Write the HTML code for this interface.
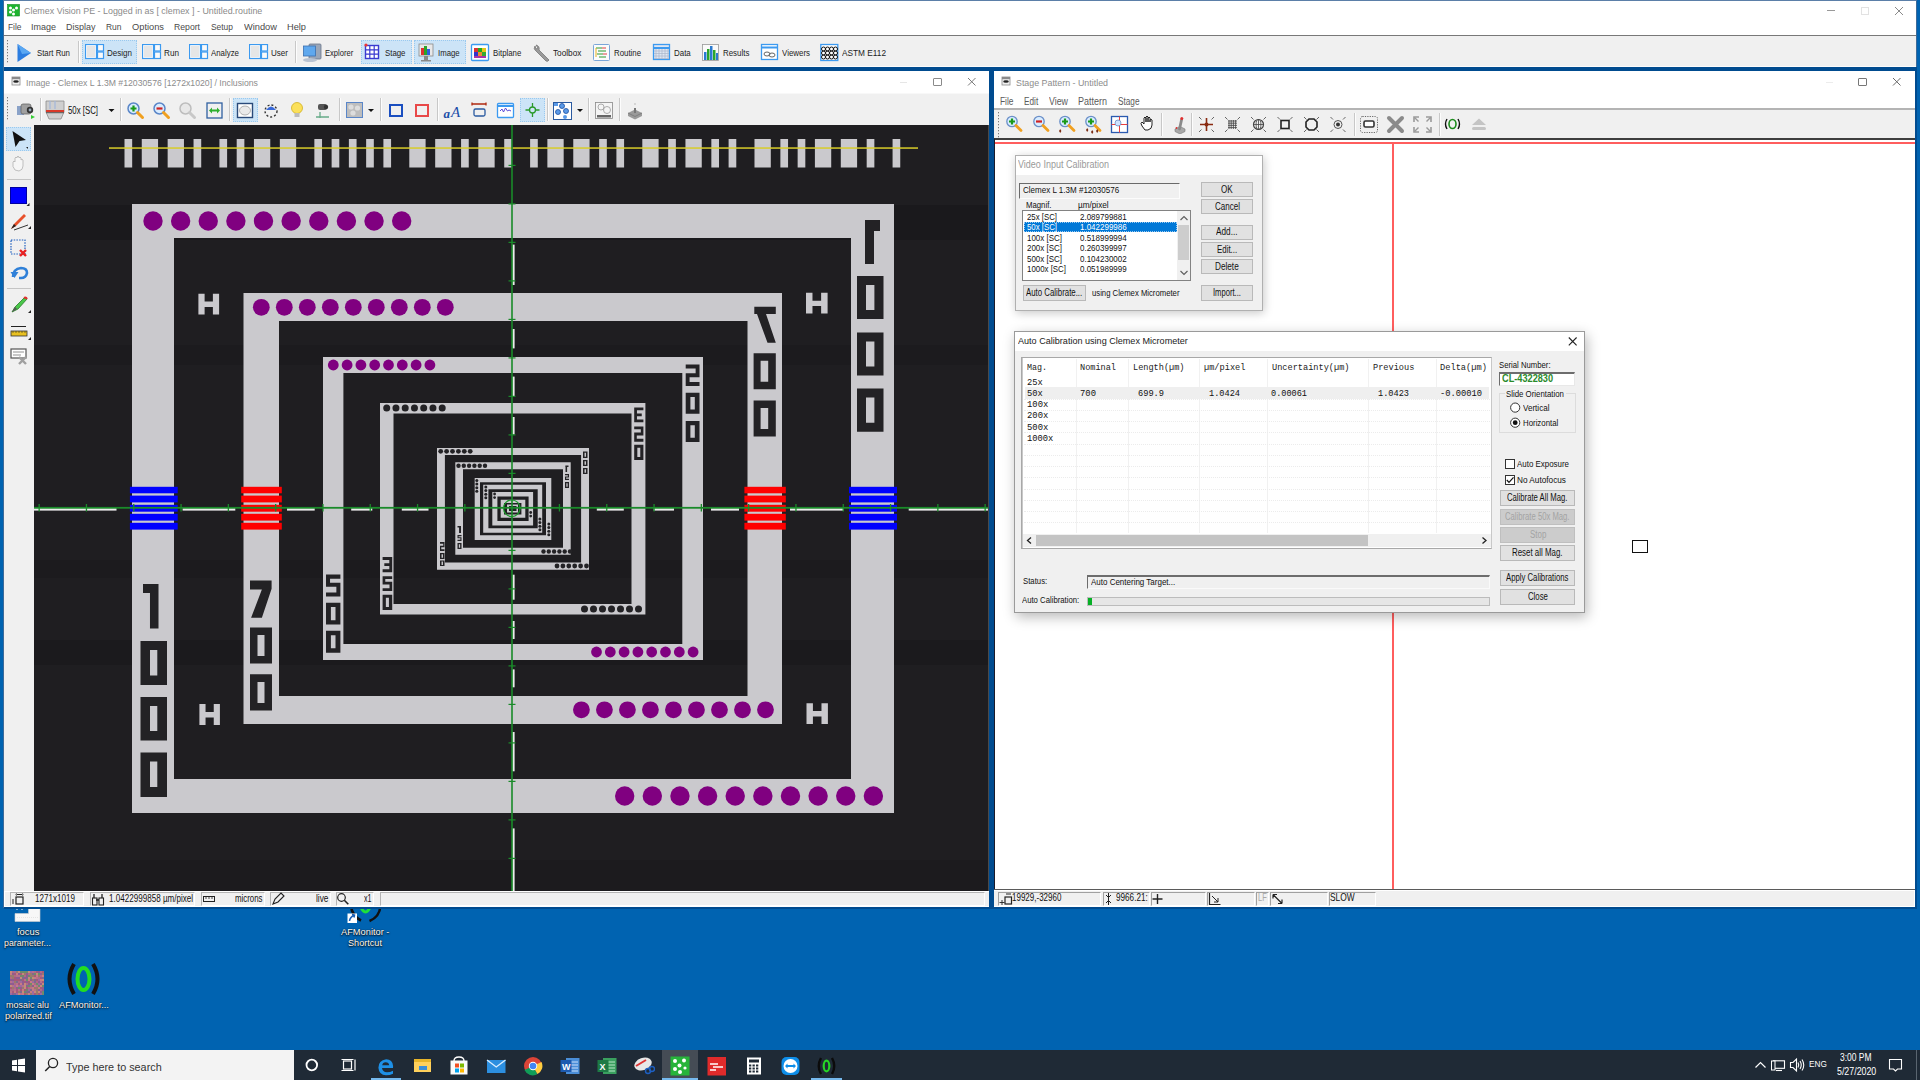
<!DOCTYPE html>
<html><head><meta charset="utf-8"><title>Clemex Vision PE</title>
<style>
html,body{margin:0;padding:0;}
body{width:1920px;height:1080px;position:relative;overflow:hidden;background:#0063b1;font-family:"Liberation Sans",sans-serif;}
div{position:absolute;box-sizing:border-box;}
.t{white-space:nowrap;transform-origin:0 0;}
</style></head><body>
<svg style="position:absolute;left:14px;top:906px;" width="28" height="17" viewBox="14 906 28 17"><path d="M15 913.5 H28.5 V907 H40 V921.5 H15 Z" fill="#f7f7f7" stroke="#cfcfcf" stroke-width="0.6"/><rect x="16" y="907.5" width="2" height="2" fill="#f2f2f2"/><rect x="21" y="907.5" width="2" height="2" fill="#f2f2f2"/><path d="M17 917.5 h21" stroke="#e4e4e4" stroke-width="1" stroke-dasharray="1 1"/></svg>
<div class="t" style="left:16.50px;top:927.16px;font-family:'Liberation Sans', sans-serif;font-size:9.86px;line-height:9.86px;color:#fff;transform:scaleX(0.9553);text-shadow:0 1px 2px #000,0 0 1px #000;">focus</div>
<div class="t" style="left:4.00px;top:937.96px;font-family:'Liberation Sans', sans-serif;font-size:9.86px;line-height:9.86px;color:#fff;transform:scaleX(0.8939);text-shadow:0 1px 2px #000,0 0 1px #000;">parameter...</div>
<svg style="position:absolute;left:340px;top:905px;" width="50" height="20" viewBox="340 905 50 20"><path d="M351 906 q1 10 10 14.5" stroke="#111" stroke-width="2.6" fill="none"/><path d="M380.5 906 q-1 11 -11 15" stroke="#111" stroke-width="2.6" fill="none"/><path d="M360.5 906 q5 12 10 0" stroke="#1ee03a" stroke-width="3.2" fill="none"/><rect x="347.5" y="913.5" width="9.5" height="9.5" fill="#fff"/><path d="M349.5 921 q0.5 -4 5 -6 m-2.5 -0.5 l2.5 0.5 l-0.5 2.5" stroke="#1a5fb4" stroke-width="1.5" fill="none"/></svg>
<div class="t" style="left:340.50px;top:927.16px;font-family:'Liberation Sans', sans-serif;font-size:9.86px;line-height:9.86px;color:#fff;transform:scaleX(0.9419);text-shadow:0 1px 2px #000,0 0 1px #000;">AFMonitor -</div>
<div class="t" style="left:348.00px;top:937.96px;font-family:'Liberation Sans', sans-serif;font-size:9.86px;line-height:9.86px;color:#fff;transform:scaleX(0.9262);text-shadow:0 1px 2px #000,0 0 1px #000;">Shortcut</div>
<svg style="position:absolute;left:10px;top:971px;" width="34" height="24" viewBox="10 971 34 24"><rect x="10" y="971" width="2" height="2" fill="#c58a7a"/><rect x="10" y="973" width="2" height="2" fill="#c77c82"/><rect x="10" y="975" width="2" height="2" fill="#9a7a6a"/><rect x="10" y="977" width="2" height="2" fill="#b06a86"/><rect x="10" y="979" width="2" height="2" fill="#8f5c90"/><rect x="10" y="981" width="2" height="2" fill="#b8708a"/><rect x="10" y="983" width="2" height="2" fill="#8f5c90"/><rect x="10" y="985" width="2" height="2" fill="#c58a7a"/><rect x="10" y="987" width="2" height="2" fill="#a55a7a"/><rect x="10" y="989" width="2" height="2" fill="#b06a86"/><rect x="10" y="991" width="2" height="2" fill="#b8708a"/><rect x="10" y="993" width="2" height="2" fill="#a06a9e"/><rect x="12" y="971" width="2" height="2" fill="#b06a86"/><rect x="12" y="973" width="2" height="2" fill="#8f5c90"/><rect x="12" y="975" width="2" height="2" fill="#9a7a6a"/><rect x="12" y="977" width="2" height="2" fill="#9a7a6a"/><rect x="12" y="979" width="2" height="2" fill="#8f5c90"/><rect x="12" y="981" width="2" height="2" fill="#a06a9e"/><rect x="12" y="983" width="2" height="2" fill="#8f5c90"/><rect x="12" y="985" width="2" height="2" fill="#b8708a"/><rect x="12" y="987" width="2" height="2" fill="#9a7a6a"/><rect x="12" y="989" width="2" height="2" fill="#b06a86"/><rect x="12" y="991" width="2" height="2" fill="#a55a7a"/><rect x="12" y="993" width="2" height="2" fill="#8f5c90"/><rect x="14" y="971" width="2" height="2" fill="#a06a9e"/><rect x="14" y="973" width="2" height="2" fill="#a55a7a"/><rect x="14" y="975" width="2" height="2" fill="#b06a86"/><rect x="14" y="977" width="2" height="2" fill="#a55a7a"/><rect x="14" y="979" width="2" height="2" fill="#a55a7a"/><rect x="14" y="981" width="2" height="2" fill="#9a7a6a"/><rect x="14" y="983" width="2" height="2" fill="#b06a86"/><rect x="14" y="985" width="2" height="2" fill="#a06a9e"/><rect x="14" y="987" width="2" height="2" fill="#b06a86"/><rect x="14" y="989" width="2" height="2" fill="#b8708a"/><rect x="14" y="991" width="2" height="2" fill="#c77c82"/><rect x="14" y="993" width="2" height="2" fill="#7f6a8c"/><rect x="16" y="971" width="2" height="2" fill="#9a7a6a"/><rect x="16" y="973" width="2" height="2" fill="#c77c82"/><rect x="16" y="975" width="2" height="2" fill="#b8708a"/><rect x="16" y="977" width="2" height="2" fill="#8f5c90"/><rect x="16" y="979" width="2" height="2" fill="#a55a7a"/><rect x="16" y="981" width="2" height="2" fill="#7f6a8c"/><rect x="16" y="983" width="2" height="2" fill="#b8708a"/><rect x="16" y="985" width="2" height="2" fill="#c77c82"/><rect x="16" y="987" width="2" height="2" fill="#8f5c90"/><rect x="16" y="989" width="2" height="2" fill="#a55a7a"/><rect x="16" y="991" width="2" height="2" fill="#a55a7a"/><rect x="16" y="993" width="2" height="2" fill="#a06a9e"/><rect x="18" y="971" width="2" height="2" fill="#c58a7a"/><rect x="18" y="973" width="2" height="2" fill="#8f5c90"/><rect x="18" y="975" width="2" height="2" fill="#b8708a"/><rect x="18" y="977" width="2" height="2" fill="#8f5c90"/><rect x="18" y="979" width="2" height="2" fill="#a55a7a"/><rect x="18" y="981" width="2" height="2" fill="#b06a86"/><rect x="18" y="983" width="2" height="2" fill="#a55a7a"/><rect x="18" y="985" width="2" height="2" fill="#a06a9e"/><rect x="18" y="987" width="2" height="2" fill="#6f8a6a"/><rect x="18" y="989" width="2" height="2" fill="#b8708a"/><rect x="18" y="991" width="2" height="2" fill="#9a7a6a"/><rect x="18" y="993" width="2" height="2" fill="#c58a7a"/><rect x="20" y="971" width="2" height="2" fill="#6f8a6a"/><rect x="20" y="973" width="2" height="2" fill="#a55a7a"/><rect x="20" y="975" width="2" height="2" fill="#6f8a6a"/><rect x="20" y="977" width="2" height="2" fill="#c58a7a"/><rect x="20" y="979" width="2" height="2" fill="#7f6a8c"/><rect x="20" y="981" width="2" height="2" fill="#a06a9e"/><rect x="20" y="983" width="2" height="2" fill="#c77c82"/><rect x="20" y="985" width="2" height="2" fill="#a06a9e"/><rect x="20" y="987" width="2" height="2" fill="#8f5c90"/><rect x="20" y="989" width="2" height="2" fill="#a55a7a"/><rect x="20" y="991" width="2" height="2" fill="#7f6a8c"/><rect x="20" y="993" width="2" height="2" fill="#b8708a"/><rect x="22" y="971" width="2" height="2" fill="#6f8a6a"/><rect x="22" y="973" width="2" height="2" fill="#c58a7a"/><rect x="22" y="975" width="2" height="2" fill="#6f8a6a"/><rect x="22" y="977" width="2" height="2" fill="#7f6a8c"/><rect x="22" y="979" width="2" height="2" fill="#a55a7a"/><rect x="22" y="981" width="2" height="2" fill="#8f5c90"/><rect x="22" y="983" width="2" height="2" fill="#8f5c90"/><rect x="22" y="985" width="2" height="2" fill="#b8708a"/><rect x="22" y="987" width="2" height="2" fill="#9a7a6a"/><rect x="22" y="989" width="2" height="2" fill="#c77c82"/><rect x="22" y="991" width="2" height="2" fill="#c58a7a"/><rect x="22" y="993" width="2" height="2" fill="#c77c82"/><rect x="24" y="971" width="2" height="2" fill="#6f8a6a"/><rect x="24" y="973" width="2" height="2" fill="#9a7a6a"/><rect x="24" y="975" width="2" height="2" fill="#b06a86"/><rect x="24" y="977" width="2" height="2" fill="#8f5c90"/><rect x="24" y="979" width="2" height="2" fill="#b8708a"/><rect x="24" y="981" width="2" height="2" fill="#a55a7a"/><rect x="24" y="983" width="2" height="2" fill="#c58a7a"/><rect x="24" y="985" width="2" height="2" fill="#c58a7a"/><rect x="24" y="987" width="2" height="2" fill="#c58a7a"/><rect x="24" y="989" width="2" height="2" fill="#a55a7a"/><rect x="24" y="991" width="2" height="2" fill="#6f8a6a"/><rect x="24" y="993" width="2" height="2" fill="#a55a7a"/><rect x="26" y="971" width="2" height="2" fill="#6f8a6a"/><rect x="26" y="973" width="2" height="2" fill="#8f5c90"/><rect x="26" y="975" width="2" height="2" fill="#8f5c90"/><rect x="26" y="977" width="2" height="2" fill="#7f6a8c"/><rect x="26" y="979" width="2" height="2" fill="#6f8a6a"/><rect x="26" y="981" width="2" height="2" fill="#8f5c90"/><rect x="26" y="983" width="2" height="2" fill="#b06a86"/><rect x="26" y="985" width="2" height="2" fill="#7f6a8c"/><rect x="26" y="987" width="2" height="2" fill="#a55a7a"/><rect x="26" y="989" width="2" height="2" fill="#6f8a6a"/><rect x="26" y="991" width="2" height="2" fill="#7f6a8c"/><rect x="26" y="993" width="2" height="2" fill="#9a7a6a"/><rect x="28" y="971" width="2" height="2" fill="#c58a7a"/><rect x="28" y="973" width="2" height="2" fill="#b06a86"/><rect x="28" y="975" width="2" height="2" fill="#6f8a6a"/><rect x="28" y="977" width="2" height="2" fill="#c58a7a"/><rect x="28" y="979" width="2" height="2" fill="#c77c82"/><rect x="28" y="981" width="2" height="2" fill="#a55a7a"/><rect x="28" y="983" width="2" height="2" fill="#8f5c90"/><rect x="28" y="985" width="2" height="2" fill="#6f8a6a"/><rect x="28" y="987" width="2" height="2" fill="#b06a86"/><rect x="28" y="989" width="2" height="2" fill="#a06a9e"/><rect x="28" y="991" width="2" height="2" fill="#7f6a8c"/><rect x="28" y="993" width="2" height="2" fill="#c77c82"/><rect x="30" y="971" width="2" height="2" fill="#a06a9e"/><rect x="30" y="973" width="2" height="2" fill="#9a7a6a"/><rect x="30" y="975" width="2" height="2" fill="#9a7a6a"/><rect x="30" y="977" width="2" height="2" fill="#6f8a6a"/><rect x="30" y="979" width="2" height="2" fill="#8f5c90"/><rect x="30" y="981" width="2" height="2" fill="#c77c82"/><rect x="30" y="983" width="2" height="2" fill="#6f8a6a"/><rect x="30" y="985" width="2" height="2" fill="#9a7a6a"/><rect x="30" y="987" width="2" height="2" fill="#b8708a"/><rect x="30" y="989" width="2" height="2" fill="#7f6a8c"/><rect x="30" y="991" width="2" height="2" fill="#c77c82"/><rect x="30" y="993" width="2" height="2" fill="#9a7a6a"/><rect x="32" y="971" width="2" height="2" fill="#b8708a"/><rect x="32" y="973" width="2" height="2" fill="#7f6a8c"/><rect x="32" y="975" width="2" height="2" fill="#9a7a6a"/><rect x="32" y="977" width="2" height="2" fill="#c58a7a"/><rect x="32" y="979" width="2" height="2" fill="#9a7a6a"/><rect x="32" y="981" width="2" height="2" fill="#a06a9e"/><rect x="32" y="983" width="2" height="2" fill="#c77c82"/><rect x="32" y="985" width="2" height="2" fill="#8f5c90"/><rect x="32" y="987" width="2" height="2" fill="#c77c82"/><rect x="32" y="989" width="2" height="2" fill="#c77c82"/><rect x="32" y="991" width="2" height="2" fill="#a06a9e"/><rect x="32" y="993" width="2" height="2" fill="#a06a9e"/><rect x="34" y="971" width="2" height="2" fill="#b06a86"/><rect x="34" y="973" width="2" height="2" fill="#6f8a6a"/><rect x="34" y="975" width="2" height="2" fill="#a55a7a"/><rect x="34" y="977" width="2" height="2" fill="#c77c82"/><rect x="34" y="979" width="2" height="2" fill="#7f6a8c"/><rect x="34" y="981" width="2" height="2" fill="#7f6a8c"/><rect x="34" y="983" width="2" height="2" fill="#b06a86"/><rect x="34" y="985" width="2" height="2" fill="#c77c82"/><rect x="34" y="987" width="2" height="2" fill="#9a7a6a"/><rect x="34" y="989" width="2" height="2" fill="#b8708a"/><rect x="34" y="991" width="2" height="2" fill="#c58a7a"/><rect x="34" y="993" width="2" height="2" fill="#a55a7a"/><rect x="36" y="971" width="2" height="2" fill="#a55a7a"/><rect x="36" y="973" width="2" height="2" fill="#c58a7a"/><rect x="36" y="975" width="2" height="2" fill="#c77c82"/><rect x="36" y="977" width="2" height="2" fill="#b8708a"/><rect x="36" y="979" width="2" height="2" fill="#a55a7a"/><rect x="36" y="981" width="2" height="2" fill="#b06a86"/><rect x="36" y="983" width="2" height="2" fill="#6f8a6a"/><rect x="36" y="985" width="2" height="2" fill="#b8708a"/><rect x="36" y="987" width="2" height="2" fill="#9a7a6a"/><rect x="36" y="989" width="2" height="2" fill="#9a7a6a"/><rect x="36" y="991" width="2" height="2" fill="#9a7a6a"/><rect x="36" y="993" width="2" height="2" fill="#9a7a6a"/><rect x="38" y="971" width="2" height="2" fill="#8f5c90"/><rect x="38" y="973" width="2" height="2" fill="#6f8a6a"/><rect x="38" y="975" width="2" height="2" fill="#9a7a6a"/><rect x="38" y="977" width="2" height="2" fill="#b06a86"/><rect x="38" y="979" width="2" height="2" fill="#a06a9e"/><rect x="38" y="981" width="2" height="2" fill="#8f5c90"/><rect x="38" y="983" width="2" height="2" fill="#a06a9e"/><rect x="38" y="985" width="2" height="2" fill="#6f8a6a"/><rect x="38" y="987" width="2" height="2" fill="#c77c82"/><rect x="38" y="989" width="2" height="2" fill="#8f5c90"/><rect x="38" y="991" width="2" height="2" fill="#c58a7a"/><rect x="38" y="993" width="2" height="2" fill="#a55a7a"/><rect x="40" y="971" width="2" height="2" fill="#b06a86"/><rect x="40" y="973" width="2" height="2" fill="#8f5c90"/><rect x="40" y="975" width="2" height="2" fill="#b06a86"/><rect x="40" y="977" width="2" height="2" fill="#a55a7a"/><rect x="40" y="979" width="2" height="2" fill="#c77c82"/><rect x="40" y="981" width="2" height="2" fill="#b8708a"/><rect x="40" y="983" width="2" height="2" fill="#8f5c90"/><rect x="40" y="985" width="2" height="2" fill="#c58a7a"/><rect x="40" y="987" width="2" height="2" fill="#a55a7a"/><rect x="40" y="989" width="2" height="2" fill="#b06a86"/><rect x="40" y="991" width="2" height="2" fill="#8f5c90"/><rect x="40" y="993" width="2" height="2" fill="#a06a9e"/><rect x="42" y="971" width="2" height="2" fill="#a55a7a"/><rect x="42" y="973" width="2" height="2" fill="#9a7a6a"/><rect x="42" y="975" width="2" height="2" fill="#c77c82"/><rect x="42" y="977" width="2" height="2" fill="#7f6a8c"/><rect x="42" y="979" width="2" height="2" fill="#c58a7a"/><rect x="42" y="981" width="2" height="2" fill="#a55a7a"/><rect x="42" y="983" width="2" height="2" fill="#c58a7a"/><rect x="42" y="985" width="2" height="2" fill="#6f8a6a"/><rect x="42" y="987" width="2" height="2" fill="#8f5c90"/><rect x="42" y="989" width="2" height="2" fill="#8f5c90"/><rect x="42" y="991" width="2" height="2" fill="#6f8a6a"/><rect x="42" y="993" width="2" height="2" fill="#6f8a6a"/></svg>
<div class="t" style="left:6.30px;top:999.96px;font-family:'Liberation Sans', sans-serif;font-size:9.86px;line-height:9.86px;color:#fff;transform:scaleX(0.9128);text-shadow:0 1px 2px #000,0 0 1px #000;">mosaic alu</div>
<div class="t" style="left:4.50px;top:1011.16px;font-family:'Liberation Sans', sans-serif;font-size:9.86px;line-height:9.86px;color:#fff;transform:scaleX(0.9284);text-shadow:0 1px 2px #000,0 0 1px #000;">polarized.tif</div>
<svg style="position:absolute;left:64px;top:960px;" width="40" height="38" viewBox="64 960 40 38"><path d="M74 964 q-9 15 0 30" stroke="#111" stroke-width="4" fill="none"/><path d="M93 964 q9 15 0 30" stroke="#111" stroke-width="4" fill="none"/><ellipse cx="83.5" cy="979" rx="6" ry="11" stroke="#22dd22" stroke-width="4" fill="none"/></svg>
<div class="t" style="left:59.30px;top:999.96px;font-family:'Liberation Sans', sans-serif;font-size:9.86px;line-height:9.86px;color:#fff;transform:scaleX(0.9413);text-shadow:0 1px 2px #000,0 0 1px #000;">AFMonitor...</div>
<div style="left:0px;top:1050px;width:1920px;height:30px;background:#1f2a36;"></div>
<svg style="position:absolute;left:11px;top:1058px;" width="15" height="15" viewBox="11 1058 15 15"><path d="M12 1060.5 l5 -0.8 v5.3 h-5z M18 1059.6 l7 -1 v6.4 h-7z M12 1066 h5 v5.3 l-5 -0.8z M18 1066 h7 v6.4 l-7 -1z" fill="#fff"/></svg>
<div style="left:36px;top:1050px;width:258px;height:30px;background:#f3f3f3;"></div>
<svg style="position:absolute;left:43px;top:1057px;" width="17" height="17" viewBox="43 1057 17 17"><circle cx="53" cy="1063" r="4.6" stroke="#222" stroke-width="1.3" fill="none"/><path d="M49.7 1066.5 l-4.5 4.6" stroke="#222" stroke-width="1.5"/></svg>
<div class="t" style="left:66.30px;top:1061.54px;font-family:'Liberation Sans', sans-serif;font-size:10.58px;line-height:10.58px;color:#333;transform:scaleX(1.0233);">Type here to search</div>
<svg style="position:absolute;left:303px;top:1057px;" width="18" height="18" viewBox="303 1057 18 18"><circle cx="311.8" cy="1065" r="5.3" stroke="#fff" stroke-width="1.8" fill="none"/></svg>
<svg style="position:absolute;left:340px;top:1057px;" width="18" height="18" viewBox="340 1057 18 18"><rect x="343.5" y="1061" width="8" height="8" stroke="#fff" stroke-width="1.2" fill="none"/><path d="M341.5 1059.5 h12 M341.5 1070.5 h12 M355 1059.5 v11" stroke="#fff" stroke-width="1.2"/></svg>
<svg style="position:absolute;left:376px;top:1056px;" width="22" height="20" viewBox="376 1056 22 20"><path d="M393 1068 h-11 q0.5 4 5 4.3 q3 0 6 -1.6 v3 q-3 1.6 -7 1.6 q-7 -0.3 -7.6 -7.5 q0 -7.5 7.8 -8.5 q6.3 0 6.9 6.7z M382.2 1065.3 h7 q-0.3 -3 -3.6 -3 q-3 0.2 -3.4 3z" fill="#1e90e6"/></svg>
<div style="left:371px;top:1078px;width:30px;height:2px;background:#76b9ed;"></div>
<svg style="position:absolute;left:413px;top:1057px;" width="20" height="18" viewBox="413 1057 20 18"><rect x="414" y="1059" width="17" height="13" fill="#e8b52a"/><rect x="414" y="1062" width="17" height="10" fill="#ffd15c"/><rect x="419" y="1066" width="8" height="4" fill="#3b8fd8"/></svg>
<svg style="position:absolute;left:449px;top:1056px;" width="21" height="21" viewBox="449 1056 21 21"><path d="M454 1061 q0 -4 5 -4 q5 0 5 4" stroke="#fff" stroke-width="1.4" fill="none"/><rect x="450.5" y="1060.5" width="17" height="14" fill="#fafafa"/><rect x="455" y="1063.5" width="4" height="4" fill="#f25022"/><rect x="460" y="1063.5" width="4" height="4" fill="#7fba00"/><rect x="455" y="1068.5" width="4" height="4" fill="#00a4ef"/><rect x="460" y="1068.5" width="4" height="4" fill="#ffb900"/></svg>
<svg style="position:absolute;left:486px;top:1057px;" width="21" height="19" viewBox="486 1057 21 19"><rect x="487" y="1060" width="18.5" height="13" fill="#2c8fe0"/><path d="M487 1060 l9.25 7 l9.25 -7" stroke="#dbeeff" stroke-width="1.3" fill="none"/></svg>
<svg style="position:absolute;left:523px;top:1056px;" width="21" height="21" viewBox="523 1056 21 21"><circle cx="533" cy="1066" r="9" fill="#db4437"/><path d="M533 1066 L524.5 1070 A9 9 0 0 0 537.5 1074 z" fill="#0f9d58"/><path d="M533 1066 L537.5 1074 A9 9 0 0 0 541.5 1062 z" fill="#ffcd40"/><circle cx="533" cy="1066" r="4.2" fill="#fff"/><circle cx="533" cy="1066" r="3.3" fill="#4285f4"/></svg>
<svg style="position:absolute;left:559px;top:1056px;" width="22" height="20" viewBox="559 1056 22 20"><rect x="566" y="1058" width="13.5" height="16" fill="#4a8ed8"/><path d="M568 1062 h10 M568 1065 h10 M568 1068 h10 M568 1071 h10" stroke="#c9defa" stroke-width="1"/><rect x="560.5" y="1060" width="11" height="12" fill="#1d5bb0"/><text x="562" y="1069.8" font-family="Liberation Sans" font-weight="bold" font-size="9" fill="#fff">W</text></svg>
<svg style="position:absolute;left:596px;top:1056px;" width="22" height="20" viewBox="596 1056 22 20"><rect x="603" y="1058" width="13.5" height="16" fill="#3aa05f"/><path d="M605 1062 h10 M605 1065 h10 M605 1068 h10 M605 1071 h10" stroke="#b8e6c8" stroke-width="1"/><rect x="597.5" y="1060" width="11" height="12" fill="#1e7a45"/><text x="599.5" y="1069.8" font-family="Liberation Sans" font-weight="bold" font-size="9" fill="#fff">X</text></svg>
<svg style="position:absolute;left:633px;top:1056px;" width="22" height="20" viewBox="633 1056 22 20"><ellipse cx="643" cy="1064" rx="9" ry="6" fill="#e7e7e7" transform="rotate(-20 643 1064)"/><path d="M636 1066 l10 -6" stroke="#d33" stroke-width="2"/><circle cx="648" cy="1071" r="2.5" stroke="#1e5fc0" stroke-width="1.4" fill="none"/><circle cx="652" cy="1069" r="2.5" stroke="#1e5fc0" stroke-width="1.4" fill="none"/></svg>
<div style="left:662px;top:1050px;width:36px;height:30px;background:#454c55;"></div>
<div style="left:662px;top:1078px;width:36px;height:2px;background:#76b9ed;"></div>
<svg style="position:absolute;left:670px;top:1056px;" width="21" height="21" viewBox="670 1056 21 21"><rect x="670.5" y="1056.5" width="19" height="19" fill="#27b43a"/><circle cx="675" cy="1061" r="2" fill="#fff"/><circle cx="684" cy="1060.5" r="2" fill="#fff"/><circle cx="679.5" cy="1065.5" r="2" fill="#fff"/><circle cx="675" cy="1069" r="2" fill="#fff"/><circle cx="680" cy="1072" r="2" fill="#fff"/><circle cx="685" cy="1068" r="1.6" fill="#fff"/></svg>
<svg style="position:absolute;left:706px;top:1056px;" width="22" height="21" viewBox="706 1056 22 21"><rect x="707.5" y="1057" width="18.5" height="18.5" fill="#e02b2b"/><path d="M710 1064 h8 M713 1067 h10 M710 1070 h6" stroke="#fff" stroke-width="1.6"/></svg>
<svg style="position:absolute;left:745px;top:1056px;" width="18" height="20" viewBox="745 1056 18 20"><rect x="747" y="1057.5" width="14" height="17" fill="#fff"/><rect x="749" y="1059.5" width="10" height="3" fill="#1f2a36"/><rect x="749.0" y="1064.5" width="2.3" height="2" fill="#1f2a36"/><rect x="749.0" y="1067.5" width="2.3" height="2" fill="#1f2a36"/><rect x="749.0" y="1070.5" width="2.3" height="2" fill="#1f2a36"/><rect x="752.5" y="1064.5" width="2.3" height="2" fill="#1f2a36"/><rect x="752.5" y="1067.5" width="2.3" height="2" fill="#1f2a36"/><rect x="752.5" y="1070.5" width="2.3" height="2" fill="#1f2a36"/><rect x="756.0" y="1064.5" width="2.3" height="2" fill="#1f2a36"/><rect x="756.0" y="1067.5" width="2.3" height="2" fill="#1f2a36"/><rect x="756.0" y="1070.5" width="2.3" height="2" fill="#1f2a36"/></svg>
<svg style="position:absolute;left:780px;top:1056px;" width="22" height="21" viewBox="780 1056 22 21"><rect x="781.5" y="1057" width="18" height="18" rx="5" fill="#0e8ee9"/><circle cx="790.5" cy="1066" r="7" fill="#fff"/><path d="M785 1066 l2.5 -2.5 v1.6 h6 v-1.6 l2.5 2.5 l-2.5 2.5 v-1.6 h-6 v1.6z" fill="#0e8ee9"/></svg>
<svg style="position:absolute;left:816px;top:1055px;" width="22" height="22" viewBox="816 1055 22 22"><path d="M821 1058 q-4.5 8 0 16" stroke="#0b0b0b" stroke-width="2.4" fill="none"/><path d="M832 1058 q4.5 8 0 16" stroke="#0b0b0b" stroke-width="2.4" fill="none"/><ellipse cx="826.5" cy="1066" rx="2.8" ry="5.3" stroke="#26d626" stroke-width="2.2" fill="none"/></svg>
<div style="left:811px;top:1078px;width:31px;height:2px;background:#76b9ed;"></div>
<svg style="position:absolute;left:1752px;top:1056px;" width="56" height="20" viewBox="1752 1056 56 20"><path d="M1755.5 1067.5 l5 -5 l5 5" stroke="#fff" stroke-width="1.2" fill="none"/><rect x="1773.5" y="1060.8" width="11" height="7.5" stroke="#fff" stroke-width="1.1" fill="none"/><rect x="1771.5" y="1061" width="3.5" height="9" fill="#1f2a36" stroke="#fff" stroke-width="1"/><path d="M1776 1070.5 h6" stroke="#fff" stroke-width="1.1"/><path d="M1790.5 1062.5 h2.5 l3.5 -3.5 v12 l-3.5 -3.5 h-2.5z" stroke="#fff" stroke-width="1.1" fill="none"/><path d="M1798 1062.5 q1.5 2.5 0 5 M1800 1061 q2.5 4 0 8 M1802 1059.5 q3.5 5.5 0 11" stroke="#fff" stroke-width="1.1" fill="none"/></svg>
<div class="t" style="left:1809.40px;top:1059.46px;font-family:'Liberation Sans', sans-serif;font-size:9.86px;line-height:9.86px;color:#fff;transform:scaleX(0.8343);">ENG</div>
<div class="t" style="left:1840.40px;top:1052.67px;font-family:'Liberation Sans', sans-serif;font-size:10.43px;line-height:10.43px;color:#fff;transform:scaleX(0.8104);">3:00 PM</div>
<div class="t" style="left:1836.60px;top:1065.64px;font-family:'Liberation Sans', sans-serif;font-size:10.58px;line-height:10.58px;color:#fff;transform:scaleX(0.8348);">5/27/2020</div>
<svg style="position:absolute;left:1886px;top:1056px;" width="18" height="18" viewBox="1886 1056 18 18"><path d="M1889.5 1059.5 h12 v9.5 h-4 l-2 2 l-2 -2 h-4z" stroke="#fff" stroke-width="1.1" fill="none"/></svg>
<div style="left:1916px;top:1050px;width:1px;height:30px;background:#5a6570;"></div>
<div style="left:3px;top:0px;width:1914px;height:908px;background:#fff;border:1px solid #3d6a99;border-top-color:#5b7fa8;"></div>
<svg style="position:absolute;left:7px;top:4px;" width="14" height="13" viewBox="7 4 14 13"><rect x="7.5" y="4.5" width="12" height="11.5" fill="#1db32e" stroke="#138a20" stroke-width="0.6"/><circle cx="10.5" cy="8" r="1.5" fill="#fff"/><circle cx="16.5" cy="8" r="1.5" fill="#fff"/><circle cx="13.5" cy="10" r="1.5" fill="#fff"/><circle cx="10.5" cy="12" r="1.5" fill="#fff"/><circle cx="13.5" cy="14" r="1.5" fill="#fff"/></svg>
<div class="t" style="left:23.50px;top:5.78px;font-family:'Liberation Sans', sans-serif;font-size:9.71px;line-height:9.71px;color:#8a8a8a;transform:scaleX(0.9173);">Clemex Vision PE - Logged in as [ clemex ] - Untitled.routine</div>
<div style="left:1827px;top:10px;width:8px;height:1px;background:#999;"></div>
<div style="left:1861px;top:7px;width:8px;height:8px;border:1px solid #e2e2e2;"></div>
<svg style="position:absolute;left:1894px;top:6px;" width="10" height="10" viewBox="1894 6 10 10"><path d="M1895 7 l8 8 M1903 7 l-8 8" stroke="#8a8a8a" stroke-width="1"/></svg>
<div class="t" style="left:7.50px;top:21.78px;font-family:'Liberation Sans', sans-serif;font-size:9.71px;line-height:9.71px;color:#4a4a4a;transform:scaleX(0.8635);">File</div>
<div class="t" style="left:31.00px;top:21.78px;font-family:'Liberation Sans', sans-serif;font-size:9.71px;line-height:9.71px;color:#4a4a4a;transform:scaleX(0.9261);">Image</div>
<div class="t" style="left:66.00px;top:21.78px;font-family:'Liberation Sans', sans-serif;font-size:9.71px;line-height:9.71px;color:#4a4a4a;transform:scaleX(0.9262);">Display</div>
<div class="t" style="left:105.50px;top:21.78px;font-family:'Liberation Sans', sans-serif;font-size:9.71px;line-height:9.71px;color:#4a4a4a;transform:scaleX(0.8699);">Run</div>
<div class="t" style="left:132.00px;top:21.78px;font-family:'Liberation Sans', sans-serif;font-size:9.71px;line-height:9.71px;color:#4a4a4a;transform:scaleX(0.9566);">Options</div>
<div class="t" style="left:174.00px;top:21.78px;font-family:'Liberation Sans', sans-serif;font-size:9.71px;line-height:9.71px;color:#4a4a4a;transform:scaleX(0.8925);">Report</div>
<div class="t" style="left:211.00px;top:21.78px;font-family:'Liberation Sans', sans-serif;font-size:9.71px;line-height:9.71px;color:#4a4a4a;transform:scaleX(0.8664);">Setup</div>
<div class="t" style="left:244.00px;top:21.78px;font-family:'Liberation Sans', sans-serif;font-size:9.71px;line-height:9.71px;color:#4a4a4a;transform:scaleX(0.9546);">Window</div>
<div class="t" style="left:287.00px;top:21.78px;font-family:'Liberation Sans', sans-serif;font-size:9.71px;line-height:9.71px;color:#4a4a4a;transform:scaleX(0.9522);">Help</div>
<div style="left:4px;top:35px;width:1912px;height:1px;background:#787878;"></div>
<div style="left:4px;top:36px;width:1912px;height:31px;background:#f0f0f0;"></div>
<div style="left:4px;top:66px;width:1912px;height:1px;background:#fbfbfb;"></div>
<svg style="position:absolute;left:6px;top:39px;" width="4" height="25" viewBox="6 39 4 25"><rect x="7" y="40" width="1" height="1.3" fill="#7a7a7a"/><rect x="7" y="43" width="1" height="1.3" fill="#7a7a7a"/><rect x="7" y="46" width="1" height="1.3" fill="#7a7a7a"/><rect x="7" y="49" width="1" height="1.3" fill="#7a7a7a"/><rect x="7" y="52" width="1" height="1.3" fill="#7a7a7a"/><rect x="7" y="55" width="1" height="1.3" fill="#7a7a7a"/><rect x="7" y="58" width="1" height="1.3" fill="#7a7a7a"/><rect x="7" y="61" width="1" height="1.3" fill="#7a7a7a"/></svg>
<svg style="position:absolute;left:16px;top:43px;" width="17" height="20" viewBox="16 43 17 20"><path d="M17.5 44 L31 53 L17.5 62 z" fill="#2b7de0"/><path d="M17.5 44 L31 53 L22 54 z" fill="#5aa7f2"/></svg>
<div class="t" style="left:37.00px;top:47.66px;font-family:'Liberation Sans', sans-serif;font-size:9.86px;line-height:9.86px;color:#222;transform:scaleX(0.7926);">Start Run</div>
<div style="left:78px;top:41px;width:1px;height:22px;background:#c8c8c8;"></div>
<div style="left:79px;top:41px;width:1px;height:22px;background:#fdfdfd;"></div>
<div style="left:82px;top:40px;width:55px;height:24px;background:#cce4f7;border:1px dotted #99c9ef;"></div>
<svg style="position:absolute;left:85px;top:44px;" width="20" height="16" viewBox="85 44 20 16"><rect x="85.5" y="44.5" width="11" height="14" fill="#fafafa" stroke="#3c9af0" stroke-width="1.2"/><rect x="97.5" y="44.5" width="6" height="6.5" fill="#fafafa" stroke="#3c9af0" stroke-width="1.2"/><rect x="97.5" y="52" width="6" height="6.5" fill="#fafafa" stroke="#3c9af0" stroke-width="1.2"/><rect x="87" y="46" width="8" height="11" fill="#e6e6e6"/></svg>
<div class="t" style="left:107.00px;top:47.66px;font-family:'Liberation Sans', sans-serif;font-size:9.86px;line-height:9.86px;color:#222;transform:scaleX(0.8144);">Design</div>
<svg style="position:absolute;left:142px;top:44px;" width="20" height="16" viewBox="142 44 20 16"><rect x="142.5" y="44.5" width="11" height="14" fill="#fafafa" stroke="#3c9af0" stroke-width="1.2"/><rect x="154.5" y="44.5" width="6" height="6.5" fill="#fafafa" stroke="#3c9af0" stroke-width="1.2"/><rect x="154.5" y="52" width="6" height="6.5" fill="#fafafa" stroke="#3c9af0" stroke-width="1.2"/><rect x="144" y="46" width="8" height="11" fill="#e6e6e6"/></svg>
<div class="t" style="left:164.00px;top:47.66px;font-family:'Liberation Sans', sans-serif;font-size:9.86px;line-height:9.86px;color:#222;transform:scaleX(0.8295);">Run</div>
<svg style="position:absolute;left:189px;top:44px;" width="20" height="16" viewBox="189 44 20 16"><rect x="189.5" y="44.5" width="11" height="14" fill="#fafafa" stroke="#3c9af0" stroke-width="1.2"/><rect x="201.5" y="44.5" width="6" height="6.5" fill="#fafafa" stroke="#3c9af0" stroke-width="1.2"/><rect x="201.5" y="52" width="6" height="6.5" fill="#fafafa" stroke="#3c9af0" stroke-width="1.2"/><rect x="191" y="46" width="8" height="11" fill="#e6e6e6"/></svg>
<div class="t" style="left:211.00px;top:47.66px;font-family:'Liberation Sans', sans-serif;font-size:9.86px;line-height:9.86px;color:#222;transform:scaleX(0.7981);">Analyze</div>
<svg style="position:absolute;left:249px;top:44px;" width="20" height="16" viewBox="249 44 20 16"><rect x="249.5" y="44.5" width="11" height="14" fill="#fafafa" stroke="#3c9af0" stroke-width="1.2"/><rect x="261.5" y="44.5" width="6" height="6.5" fill="#fafafa" stroke="#3c9af0" stroke-width="1.2"/><rect x="261.5" y="52" width="6" height="6.5" fill="#fafafa" stroke="#3c9af0" stroke-width="1.2"/><rect x="251" y="46" width="8" height="11" fill="#e6e6e6"/></svg>
<div class="t" style="left:271.00px;top:47.66px;font-family:'Liberation Sans', sans-serif;font-size:9.86px;line-height:9.86px;color:#222;transform:scaleX(0.8175);">User</div>
<div style="left:295px;top:41px;width:1px;height:22px;background:#c8c8c8;"></div>
<div style="left:296px;top:41px;width:1px;height:22px;background:#fdfdfd;"></div>
<svg style="position:absolute;left:302px;top:43px;" width="21" height="20" viewBox="302 43 21 20"><rect x="309" y="44" width="12" height="15" rx="1" fill="#9aa6b8" stroke="#6b778a" stroke-width="0.8"/><rect x="303.5" y="46" width="12" height="10" fill="#5fa8ee" stroke="#3a6fb0" stroke-width="0.8"/><ellipse cx="310" cy="60" rx="7" ry="2" fill="#b9c3d2"/></svg>
<div class="t" style="left:324.70px;top:47.66px;font-family:'Liberation Sans', sans-serif;font-size:9.86px;line-height:9.86px;color:#222;transform:scaleX(0.7709);">Explorer</div>
<div style="left:361px;top:40px;width:51px;height:24px;background:#cce4f7;border:1px dotted #99c9ef;"></div>
<svg style="position:absolute;left:364px;top:43px;" width="16" height="18" viewBox="364 43 16 18"><rect x="365.5" y="45.5" width="13" height="13" fill="#fff" stroke="#3a3ad0" stroke-width="1.4"/><path d="M365.5 49.8 h13 M365.5 54.2 h13 M369.8 45.5 v13 M374.2 45.5 v13" stroke="#3a3ad0" stroke-width="1.2"/><circle cx="366" cy="45" r="1.6" fill="#e33"/></svg>
<div class="t" style="left:385.30px;top:47.66px;font-family:'Liberation Sans', sans-serif;font-size:9.86px;line-height:9.86px;color:#222;transform:scaleX(0.7955);">Stage</div>
<div style="left:414px;top:40px;width:52px;height:24px;background:#cce4f7;border:1px dotted #99c9ef;"></div>
<svg style="position:absolute;left:418px;top:43px;" width="17" height="20" viewBox="418 43 17 20"><rect x="419" y="44" width="14" height="12" fill="#e8e8e8" stroke="#8a8a8a" stroke-width="0.8"/><rect x="421" y="48" width="3" height="7" fill="#e03030"/><rect x="424" y="46" width="3" height="9" fill="#2aa52a"/><rect x="427" y="49" width="3" height="6" fill="#2f5fe0"/><rect x="424" y="56" width="4" height="4" fill="#888"/><rect x="421" y="60" width="10" height="1.5" fill="#888"/></svg>
<div class="t" style="left:438.30px;top:47.66px;font-family:'Liberation Sans', sans-serif;font-size:9.86px;line-height:9.86px;color:#222;transform:scaleX(0.7921);">Image</div>
<svg style="position:absolute;left:470px;top:43px;" width="20" height="20" viewBox="470 43 20 20"><rect x="471.5" y="44.5" width="17" height="16" rx="1" fill="#fff" stroke="#3c9af0" stroke-width="1.3"/><rect x="474" y="48" width="4" height="4" fill="#d33"/><rect x="478" y="48" width="4" height="4" fill="#2a2"/><rect x="482" y="48" width="4" height="4" fill="#e6c619"/><rect x="474" y="52" width="4" height="4" fill="#33c"/><rect x="478" y="52" width="4" height="4" fill="#e83"/><rect x="482" y="52" width="4" height="4" fill="#3a3"/><rect x="474" y="56" width="12" height="2" fill="#a3a"/></svg>
<div class="t" style="left:492.50px;top:47.66px;font-family:'Liberation Sans', sans-serif;font-size:9.86px;line-height:9.86px;color:#222;transform:scaleX(0.7944);">Bitplane</div>
<svg style="position:absolute;left:531px;top:43px;" width="20" height="20" viewBox="531 43 20 20"><path d="M535 46 q-2 3 1 5 l10 10 q2 1 3 -1 l-10 -10 q1 -4 -3 -5 l2 3 l-2 1z" fill="#9a9a9a" stroke="#777" stroke-width="0.8"/></svg>
<div class="t" style="left:553.30px;top:47.66px;font-family:'Liberation Sans', sans-serif;font-size:9.86px;line-height:9.86px;color:#222;transform:scaleX(0.8365);">Toolbox</div>
<svg style="position:absolute;left:592px;top:43px;" width="19" height="20" viewBox="592 43 19 20"><rect x="593.5" y="44.5" width="16" height="16" rx="1" fill="#fbfbfb" stroke="#7aa6d8" stroke-width="1"/><path d="M596 48 h6 M598 51 h8 M597 54 h6 M599 57 h7" stroke="#2f9a2f" stroke-width="1.2"/><path d="M602 48 h4 M603 54 h4" stroke="#e04040" stroke-width="1.2"/><path d="M596 48 v9" stroke="#e8b020" stroke-width="1"/></svg>
<div class="t" style="left:614.20px;top:47.66px;font-family:'Liberation Sans', sans-serif;font-size:9.86px;line-height:9.86px;color:#222;transform:scaleX(0.7982);">Routine</div>
<svg style="position:absolute;left:652px;top:43px;" width="19" height="20" viewBox="652 43 19 20"><rect x="653.5" y="44.5" width="16" height="15" fill="#dfe6f2" stroke="#3c9af0" stroke-width="1.3"/><path d="M653.5 48 h16" stroke="#3c9af0" stroke-width="2"/><path d="M656 49 v10" stroke="#a9b6cc" stroke-width="0.7"/><path d="M659 49 v10" stroke="#a9b6cc" stroke-width="0.7"/><path d="M662 49 v10" stroke="#a9b6cc" stroke-width="0.7"/><path d="M665 49 v10" stroke="#a9b6cc" stroke-width="0.7"/><path d="M668 49 v10" stroke="#a9b6cc" stroke-width="0.7"/><path d="M654 51.0 h15" stroke="#a9b6cc" stroke-width="0.7"/><path d="M654 53.5 h15" stroke="#a9b6cc" stroke-width="0.7"/><path d="M654 56.0 h15" stroke="#a9b6cc" stroke-width="0.7"/><path d="M654 58.5 h15" stroke="#a9b6cc" stroke-width="0.7"/></svg>
<div class="t" style="left:674.00px;top:47.66px;font-family:'Liberation Sans', sans-serif;font-size:9.86px;line-height:9.86px;color:#222;transform:scaleX(0.8060);">Data</div>
<svg style="position:absolute;left:701px;top:43px;" width="20" height="20" viewBox="701 43 20 20"><rect x="702.5" y="44.5" width="16" height="16" fill="#fafafa" stroke="#999" stroke-width="0.8"/><rect x="704" y="52" width="2.5" height="8" fill="#2a7ad0"/><rect x="707" y="49" width="2.5" height="11" fill="#2aa52a"/><rect x="710" y="46" width="2.5" height="14" fill="#2a7ad0"/><rect x="713" y="50" width="2.5" height="10" fill="#2aa52a"/><rect x="716" y="53" width="2" height="7" fill="#2a7ad0"/></svg>
<div class="t" style="left:723.30px;top:47.66px;font-family:'Liberation Sans', sans-serif;font-size:9.86px;line-height:9.86px;color:#222;transform:scaleX(0.8032);">Results</div>
<svg style="position:absolute;left:760px;top:43px;" width="20" height="20" viewBox="760 43 20 20"><rect x="761.5" y="44.5" width="16" height="15" fill="#fff" stroke="#3c9af0" stroke-width="1.3"/><path d="M761.5 47.5 h16" stroke="#3c9af0" stroke-width="2"/><ellipse cx="767" cy="54" rx="3" ry="2" stroke="#666" stroke-width="1" fill="none"/><ellipse cx="772" cy="55" rx="3" ry="2" stroke="#666" stroke-width="1" fill="none"/></svg>
<div class="t" style="left:781.70px;top:47.66px;font-family:'Liberation Sans', sans-serif;font-size:9.86px;line-height:9.86px;color:#222;transform:scaleX(0.8026);">Viewers</div>
<svg style="position:absolute;left:820px;top:43px;" width="20" height="20" viewBox="820 43 20 20"><rect x="820.8" y="44.5" width="17" height="16" fill="#fff" stroke="#3c9af0" stroke-width="1.3"/><circle cx="823.5" cy="49" r="2" stroke="#111" stroke-width="1" fill="none"/><circle cx="823.5" cy="53" r="2" stroke="#111" stroke-width="1" fill="none"/><circle cx="823.5" cy="57" r="2" stroke="#111" stroke-width="1" fill="none"/><circle cx="827.5" cy="49" r="2" stroke="#111" stroke-width="1" fill="none"/><circle cx="827.5" cy="53" r="2" stroke="#111" stroke-width="1" fill="none"/><circle cx="827.5" cy="57" r="2" stroke="#111" stroke-width="1" fill="none"/><circle cx="831.5" cy="49" r="2" stroke="#111" stroke-width="1" fill="none"/><circle cx="831.5" cy="53" r="2" stroke="#111" stroke-width="1" fill="none"/><circle cx="831.5" cy="57" r="2" stroke="#111" stroke-width="1" fill="none"/><circle cx="835.5" cy="49" r="2" stroke="#111" stroke-width="1" fill="none"/><circle cx="835.5" cy="53" r="2" stroke="#111" stroke-width="1" fill="none"/><circle cx="835.5" cy="57" r="2" stroke="#111" stroke-width="1" fill="none"/></svg>
<div class="t" style="left:841.70px;top:47.66px;font-family:'Liberation Sans', sans-serif;font-size:9.86px;line-height:9.86px;color:#222;transform:scaleX(0.8419);">ASTM E112</div>
<div style="left:4px;top:67px;width:1913px;height:842px;background:#004b8f;"></div>
<div style="left:4px;top:71px;width:985px;height:836px;background:#fff;"></div>
<svg style="position:absolute;left:11px;top:76px;" width="11" height="10" viewBox="11 76 11 10"><rect x="12" y="77" width="8" height="8" fill="#f0f0f0" stroke="#8a8a8a" stroke-width="0.8"/><rect x="12" y="77" width="8" height="2.2" fill="#8a8a8a"/><ellipse cx="16" cy="81.5" rx="2.8" ry="1.2" fill="#222"/></svg>
<div class="t" style="left:26.00px;top:77.50px;font-family:'Liberation Sans', sans-serif;font-size:9.57px;line-height:9.57px;color:#8c8c8c;transform:scaleX(0.9084);">Image - Clemex L 1.3M #12030576 [1272x1020] / Inclusions</div>
<div style="left:900px;top:82px;width:7px;height:1px;background:#e6e6e6;"></div>
<div style="left:933px;top:78px;width:9px;height:8px;border:1px solid #8a8a8a;border-radius:1px;"></div>
<svg style="position:absolute;left:967px;top:77px;" width="10" height="10" viewBox="967 77 10 10"><path d="M968 78 l7.5 7.5 M975.5 78 l-7.5 7.5" stroke="#7a7a7a" stroke-width="1"/></svg>
<div style="left:4px;top:93px;width:985px;height:32px;background:#f0f0f0;"></div>
<div style="left:4px;top:93px;width:985px;height:1px;background:#f8f8f8;"></div>
<svg style="position:absolute;left:6px;top:96px;" width="4" height="25" viewBox="6 96 4 25"><rect x="7" y="97" width="1" height="1.3" fill="#7a7a7a"/><rect x="7" y="100" width="1" height="1.3" fill="#7a7a7a"/><rect x="7" y="103" width="1" height="1.3" fill="#7a7a7a"/><rect x="7" y="106" width="1" height="1.3" fill="#7a7a7a"/><rect x="7" y="109" width="1" height="1.3" fill="#7a7a7a"/><rect x="7" y="112" width="1" height="1.3" fill="#7a7a7a"/><rect x="7" y="115" width="1" height="1.3" fill="#7a7a7a"/><rect x="7" y="118" width="1" height="1.3" fill="#7a7a7a"/></svg>
<svg style="position:absolute;left:15px;top:101px;" width="21" height="19" viewBox="15 101 21 19"><rect x="17" y="106" width="7" height="9" fill="#8aa2c8"/><rect x="21" y="104" width="10" height="10" rx="2" fill="#a0a0a0" stroke="#666" stroke-width="0.8"/><circle cx="30" cy="110" r="3.2" fill="#333"/><circle cx="30" cy="110" r="1.4" fill="#9ab"/><path d="M31 115 l4 2 l-4 2z" fill="#3c3"/></svg>
<div style="left:40px;top:98px;width:1px;height:23px;background:#c8c8c8;"></div>
<div style="left:41px;top:98px;width:1px;height:23px;background:#fdfdfd;"></div>
<svg style="position:absolute;left:45px;top:100px;" width="21" height="22" viewBox="45 100 21 22"><path d="M46 101 h18 v11 l-3 7 h-12 l-3 -7z" fill="#cfcfcf" stroke="#8a8a8a" stroke-width="0.8"/><rect x="46" y="110" width="18" height="2.2" fill="#d93a2a"/><rect x="46" y="112.2" width="18" height="1" fill="#555"/><path d="M50 101 v8 M55 101 v8" stroke="#a7b9da" stroke-width="1.3"/></svg>
<div class="t" style="left:68.00px;top:104.68px;font-family:'Liberation Sans', sans-serif;font-size:11.01px;line-height:11.01px;color:#111;transform:scaleX(0.7102);">50x [SC]</div>
<svg style="position:absolute;left:106px;top:107px;" width="10" height="6" viewBox="106 107 10 6"><path d="M108.5 109 h6 l-3 3z" fill="#111"/></svg>
<div style="left:120px;top:98px;width:1px;height:23px;background:#c8c8c8;"></div>
<div style="left:121px;top:98px;width:1px;height:23px;background:#fdfdfd;"></div>
<svg style="position:absolute;left:126px;top:101px;" width="20" height="20" viewBox="126 101 20 20"><circle cx="133.5" cy="108.5" r="5.5" fill="#d9ecff" stroke="#5a86c8" stroke-width="1.5"/><path d="M137.5 112.5 l5 5" stroke="#f0a020" stroke-width="3" stroke-linecap="round"/><path d="M133.5 105.5 v6 M130.5 108.5 h6" stroke="#1a9a1a" stroke-width="2.2"/></svg>
<svg style="position:absolute;left:152px;top:101px;" width="20" height="20" viewBox="152 101 20 20"><circle cx="159.5" cy="108.5" r="5.5" fill="#d9ecff" stroke="#5a86c8" stroke-width="1.5"/><path d="M163.5 112.5 l5 5" stroke="#f0a020" stroke-width="3" stroke-linecap="round"/><path d="M156.5 108.5 h6" stroke="#d02020" stroke-width="2.2"/></svg>
<svg style="position:absolute;left:178px;top:101px;" width="20" height="20" viewBox="178 101 20 20"><circle cx="185.5" cy="108.5" r="5.5" fill="#e8e8e8" stroke="#bdbdbd" stroke-width="1.5"/><path d="M189.5 112.5 l5 5" stroke="#c8c8c8" stroke-width="3" stroke-linecap="round"/></svg>
<svg style="position:absolute;left:205px;top:101px;" width="19" height="20" viewBox="205 101 19 20"><rect x="207" y="103" width="15" height="15" fill="none" stroke="#3060a0" stroke-width="1.3"/><path d="M209 110.5 l3 -3 v2 h5 v-2 l3 3 l-3 3 v-2 h-5 v2z" fill="#2fb02f"/></svg>
<div style="left:229px;top:98px;width:1px;height:23px;background:#c8c8c8;"></div>
<div style="left:230px;top:98px;width:1px;height:23px;background:#fdfdfd;"></div>
<div style="left:233px;top:98px;width:25px;height:24px;background:#cce4f7;border:1px dotted #99c9ef;"></div>
<svg style="position:absolute;left:235px;top:101px;" width="20" height="20" viewBox="235 101 20 20"><rect x="237.5" y="103.5" width="15" height="14" fill="#fff" stroke="#2a4a7a" stroke-width="1.4"/><ellipse cx="245" cy="110.5" rx="5.5" ry="4.5" fill="#eaeaea" stroke="#888" stroke-width="0.6"/></svg>
<svg style="position:absolute;left:262px;top:101px;" width="19" height="20" viewBox="262 101 19 20"><circle cx="271" cy="111" r="6" fill="none" stroke="#333" stroke-width="1.4" stroke-dasharray="2 2"/><path d="M266 110 q5 -7 10 0z" fill="#3a6ad8"/></svg>
<svg style="position:absolute;left:290px;top:101px;" width="15" height="20" viewBox="290 101 15 20"><circle cx="297" cy="108" r="5.5" fill="#fbe05a" stroke="#d0b020" stroke-width="0.8"/><rect x="294.5" y="113" width="5" height="4" fill="#bbb"/></svg>
<svg style="position:absolute;left:315px;top:101px;" width="17" height="20" viewBox="315 101 17 20"><rect x="318" y="104" width="9" height="6" rx="2" fill="#555"/><circle cx="326" cy="107" r="2.2" fill="#333"/><path d="M320 112 v6 M316 117 h13" stroke="#6a8" stroke-width="1.3"/></svg>
<div style="left:339px;top:98px;width:1px;height:23px;background:#c8c8c8;"></div>
<div style="left:340px;top:98px;width:1px;height:23px;background:#fdfdfd;"></div>
<svg style="position:absolute;left:345px;top:101px;" width="20" height="20" viewBox="345 101 20 20"><rect x="346.5" y="102.5" width="16" height="15" fill="#bdbdbd" stroke="#5a86c8" stroke-width="1"/><circle cx="351" cy="107" r="2.6" fill="#ddd"/><circle cx="357.5" cy="108" r="2.6" fill="#ddd"/><circle cx="353" cy="113" r="2.6" fill="#ddd"/></svg>
<svg style="position:absolute;left:367px;top:107px;" width="10" height="6" viewBox="367 107 10 6"><path d="M368 109 h6 l-3 3z" fill="#111"/></svg>
<div style="left:380px;top:98px;width:1px;height:23px;background:#c8c8c8;"></div>
<div style="left:381px;top:98px;width:1px;height:23px;background:#fdfdfd;"></div>
<div style="left:389px;top:104px;width:14px;height:13px;border:2px solid #1a4ec0;"></div>
<div style="left:415px;top:104px;width:14px;height:13px;border:2px solid #e84848;"></div>
<div style="left:437px;top:98px;width:1px;height:23px;background:#c8c8c8;"></div>
<div style="left:438px;top:98px;width:1px;height:23px;background:#fdfdfd;"></div>
<svg style="position:absolute;left:443px;top:101px;" width="20" height="20" viewBox="443 101 20 20"><text x="443.5" y="118" font-family="Liberation Serif" font-size="13" font-style="italic" fill="#1a4ea8" font-weight="bold">a</text><text x="451" y="117" font-family="Liberation Serif" font-size="15" font-style="italic" fill="#1a4ea8">A</text></svg>
<svg style="position:absolute;left:470px;top:101px;" width="19" height="20" viewBox="470 101 19 20"><path d="M472 104 h14 M472 102.5 v3 M486 102.5 v3" stroke="#b02a10" stroke-width="1.3"/><rect x="474" y="109" width="11" height="7" rx="1.5" fill="none" stroke="#2a5aa0" stroke-width="1.3"/></svg>
<svg style="position:absolute;left:496px;top:101px;" width="20" height="20" viewBox="496 101 20 20"><rect x="497.5" y="103.5" width="16" height="14" rx="1" fill="#fff" stroke="#3c9af0" stroke-width="1.3"/><path d="M497.5 106 h16" stroke="#3c9af0" stroke-width="2"/><path d="M500 111 l2 -2 l1.5 3 l2 -4 l2 3 l1.5 -1 l2 1" stroke="#5a4ad8" stroke-width="1" fill="none"/></svg>
<div style="left:520px;top:98px;width:25px;height:24px;background:#cce4f7;border:1px dotted #99c9ef;"></div>
<svg style="position:absolute;left:523px;top:101px;" width="20" height="20" viewBox="523 101 20 20"><circle cx="532.5" cy="110" r="3" fill="none" stroke="#2a9a2a" stroke-width="1.3"/><path d="M532.5 103 v4 M532.5 113 v4 M525.5 110 h4 M535.5 110 h4" stroke="#2a9a2a" stroke-width="1.3"/></svg>
<div style="left:547px;top:98px;width:1px;height:23px;background:#c8c8c8;"></div>
<div style="left:548px;top:98px;width:1px;height:23px;background:#fdfdfd;"></div>
<svg style="position:absolute;left:552px;top:101px;" width="21" height="20" viewBox="552 101 21 20"><rect x="553.5" y="102.5" width="18" height="17" fill="#fff" stroke="#2a5aa0" stroke-width="1"/><circle cx="562" cy="106" r="2.5" fill="#5a9ae8" stroke="#1a4ea0" stroke-width="0.8"/><circle cx="558" cy="112" r="2.5" fill="#5a9ae8" stroke="#1a4ea0" stroke-width="0.8"/><circle cx="566" cy="111" r="2.5" fill="#5a9ae8" stroke="#1a4ea0" stroke-width="0.8"/><circle cx="565" cy="117" r="2" fill="#5a9ae8"/><rect x="554" y="103" width="4" height="3" fill="#5a9ae8"/></svg>
<svg style="position:absolute;left:576px;top:107px;" width="10" height="6" viewBox="576 107 10 6"><path d="M577 109 h6 l-3 3z" fill="#111"/></svg>
<div style="left:588px;top:98px;width:1px;height:23px;background:#c8c8c8;"></div>
<div style="left:589px;top:98px;width:1px;height:23px;background:#fdfdfd;"></div>
<svg style="position:absolute;left:594px;top:101px;" width="20" height="20" viewBox="594 101 20 20"><rect x="595.5" y="102.5" width="17" height="16" fill="#f4f4f4" stroke="#888" stroke-width="0.8"/><circle cx="601" cy="107" r="3" fill="none" stroke="#999" stroke-width="0.8"/><circle cx="607" cy="110" r="3.5" fill="none" stroke="#999" stroke-width="0.8"/><rect x="597" y="115" width="14" height="2.5" fill="#666"/></svg>
<div style="left:619px;top:98px;width:1px;height:23px;background:#c8c8c8;"></div>
<div style="left:620px;top:98px;width:1px;height:23px;background:#fdfdfd;"></div>
<svg style="position:absolute;left:626px;top:101px;" width="18" height="20" viewBox="626 101 18 20"><path d="M628 113 l7 -3.5 l7 3.5 v3 l-7 3.5 l-7 -3.5z" fill="#9a9a9a"/><path d="M628 113 l7 3.5 l7 -3.5" fill="none" stroke="#777" stroke-width="0.8"/><rect x="634" y="108" width="2" height="5" fill="#777"/><path d="M635 103 v2" stroke="#bbb" stroke-width="1"/></svg>
<div style="left:4px;top:125px;width:30px;height:766px;background:#f0f0f0;"></div>
<div style="left:6px;top:127px;width:25px;height:24px;background:#cce4f7;border:1px dotted #99c9ef;"></div>
<svg style="position:absolute;left:10px;top:129px;" width="18" height="20" viewBox="10 129 18 20"><path d="M12.5 131 L26 140 L19.5 141 L15.5 147z" fill="#111"/><path d="M26 147 l2 0 l0 2 z" fill="#222"/></svg>
<svg style="position:absolute;left:10px;top:156px;" width="18" height="17" viewBox="10 156 18 17"><path d="M15 170 q-3 -3 -2 -8 q1 -2 2 0 v-4 q1 -2 2 0 v-1 q1 -2 2 0 v1 q1 -2 2 0 v2 q1 -1.5 2 0 v6 q0 4 -4 5z" fill="#f6f6f6" stroke="#b8b8b8" stroke-width="0.9"/></svg>
<div style="left:7px;top:179px;width:24px;height:1px;background:#c4c4c4;"></div>
<div style="left:10px;top:187px;width:17px;height:17px;background:#0000ff;border:1px solid #0000a0;"></div>
<svg style="position:absolute;left:26px;top:203px;" width="4" height="4" viewBox="26 203 4 4"><path d="M26.5 206 h3 v-3z" fill="#222"/></svg>
<svg style="position:absolute;left:9px;top:213px;" width="22" height="20" viewBox="9 213 22 20"><path d="M11 229 l3 -5 l10 -10 l2 2 l-10 10z" fill="#e8502a"/><path d="M11 229 l3 -5 l2 2z" fill="#222"/><path d="M14 230 l14 -5" stroke="#333" stroke-width="1"/><path d="M28 229 h3 v-3z" fill="#222"/></svg>
<svg style="position:absolute;left:9px;top:238px;" width="22" height="21" viewBox="9 238 22 21"><rect x="11" y="240" width="14" height="14" fill="none" stroke="#1f5fbf" stroke-width="1.2" stroke-dasharray="1.5 1.2"/><path d="M20 250 l6 6 M26 250 l-6 6" stroke="#e82020" stroke-width="2.4"/></svg>
<svg style="position:absolute;left:9px;top:265px;" width="22" height="18" viewBox="9 265 22 18"><path d="M13 277 q0 -8 8 -9 q6 0 6 5 q-1 5 -6 5 h-2" stroke="#2f80d8" stroke-width="2.6" fill="none"/><path d="M10.5 272 l4 6 l4 -6z" fill="#2f80d8"/></svg>
<div style="left:7px;top:288px;width:24px;height:1px;background:#c4c4c4;"></div>
<svg style="position:absolute;left:9px;top:296px;" width="22" height="19" viewBox="9 296 22 19"><path d="M12 312 l3 -5 l9 -9 q2 -1 3 1 l-9 10z" fill="#4ac84a" stroke="#2a7a2a" stroke-width="0.8"/><path d="M24 298 q2 -1 3 1" stroke="#e03030" stroke-width="2" fill="none"/><path d="M12 312 l3 -5 l2 2z" fill="#555"/><path d="M28 313 h3 v-3z" fill="#222"/></svg>
<svg style="position:absolute;left:9px;top:323px;" width="22" height="18" viewBox="9 323 22 18"><path d="M11 326.5 h15" stroke="#222" stroke-width="1"/><rect x="11" y="331" width="16" height="5" fill="#e8c020" stroke="#333" stroke-width="0.8"/><path d="M13 331 v2 M16 331 v2 M19 331 v2 M22 331 v2 M25 331 v2" stroke="#333" stroke-width="0.6"/><path d="M28 340 h3 v-3z" fill="#222"/></svg>
<svg style="position:absolute;left:9px;top:347px;" width="22" height="20" viewBox="9 347 22 20"><rect x="11" y="349" width="15" height="9" fill="#fff" stroke="#555" stroke-width="1.2"/><path d="M13 352 h11 M13 355 h8" stroke="#777" stroke-width="0.8"/><path d="M19 357 l7 7 M26 357 l-7 7" stroke="#a0a0a0" stroke-width="2.4"/></svg>
<div style="left:34px;top:125px;width:954px;height:766px;background:#1f1e21;"></div>
<div style="left:988px;top:125px;width:1px;height:766px;background:#4a4a4a;"></div>
<div style="left:4px;top:891px;width:985px;height:16px;background:#f0f0f0;border-top:1px solid #fff;border-bottom:1px solid #fff;border-left:1px solid #fff;"></div>
<div style="left:10px;top:892px;width:74px;height:14px;border-left:1px solid #b4b4b4;border-top:1px solid #b4b4b4;border-right:1px solid #fff;border-bottom:1px solid #fff;"></div>
<div style="left:90px;top:892px;width:105px;height:14px;border-left:1px solid #b4b4b4;border-top:1px solid #b4b4b4;border-right:1px solid #fff;border-bottom:1px solid #fff;"></div>
<div style="left:201px;top:892px;width:64px;height:14px;border-left:1px solid #b4b4b4;border-top:1px solid #b4b4b4;border-right:1px solid #fff;border-bottom:1px solid #fff;"></div>
<div style="left:270px;top:892px;width:61px;height:14px;border-left:1px solid #b4b4b4;border-top:1px solid #b4b4b4;border-right:1px solid #fff;border-bottom:1px solid #fff;"></div>
<div style="left:336px;top:892px;width:38px;height:14px;border-left:1px solid #b4b4b4;border-top:1px solid #b4b4b4;border-right:1px solid #fff;border-bottom:1px solid #fff;"></div>
<div style="left:380px;top:892px;width:605px;height:14px;border-left:1px solid #b4b4b4;border-top:1px solid #b4b4b4;border-right:1px solid #fff;border-bottom:1px solid #fff;"></div>
<svg style="position:absolute;left:11px;top:893px;" width="14" height="13" viewBox="11 893 14 13"><rect x="16" y="897" width="7" height="7" stroke="#222" stroke-width="1.2" fill="none"/><path d="M17 894.5 h5 M13 899 v5" stroke="#222" stroke-width="1"/><path d="M17 893.5 l-1.3 1 l1.3 1 M22 893.5 l1.3 1 l-1.3 1" stroke="#222" stroke-width="0.8" fill="none"/></svg>
<div class="t" style="left:34.50px;top:894.17px;font-family:'Liberation Sans', sans-serif;font-size:10.43px;line-height:10.43px;color:#111;transform:scaleX(0.7744);">1271x1019</div>
<svg style="position:absolute;left:91px;top:893px;" width="14" height="13" viewBox="91 893 14 13"><rect x="92.5" y="898" width="4.5" height="7" fill="none" stroke="#222" stroke-width="1.1"/><rect x="99" y="898" width="4.5" height="7" fill="none" stroke="#222" stroke-width="1.1"/><path d="M94 894 v4 M102 894 v4 M96 900 h3" stroke="#222" stroke-width="1.3"/></svg>
<div class="t" style="left:108.80px;top:894.17px;font-family:'Liberation Sans', sans-serif;font-size:10.43px;line-height:10.43px;color:#111;transform:scaleX(0.7748);">1.0422999858 µm/pixel</div>
<svg style="position:absolute;left:202px;top:895px;" width="14" height="8" viewBox="202 895 14 8"><rect x="203.5" y="896.5" width="11" height="5" fill="none" stroke="#222" stroke-width="1"/><path d="M206 897 v2 M209 897 v2 M212 897 v2" stroke="#222" stroke-width="0.8"/></svg>
<div class="t" style="left:234.50px;top:894.17px;font-family:'Liberation Sans', sans-serif;font-size:10.43px;line-height:10.43px;color:#111;transform:scaleX(0.7530);">microns</div>
<svg style="position:absolute;left:271px;top:892px;" width="14" height="14" viewBox="271 892 14 14"><path d="M273 904 l2 -5 l6 -6 l3 3 l-6 6z" fill="none" stroke="#222" stroke-width="1.1"/></svg>
<div class="t" style="left:315.50px;top:894.17px;font-family:'Liberation Sans', sans-serif;font-size:10.43px;line-height:10.43px;color:#111;transform:scaleX(0.7986);">live</div>
<svg style="position:absolute;left:336px;top:892px;" width="14" height="14" viewBox="336 892 14 14"><circle cx="341.5" cy="897.5" r="3.8" stroke="#222" stroke-width="1.2" fill="none"/><path d="M344.3 900.3 l4 4" stroke="#222" stroke-width="1.6"/></svg>
<div class="t" style="left:363.80px;top:894.17px;font-family:'Liberation Sans', sans-serif;font-size:10.43px;line-height:10.43px;color:#111;transform:scaleX(0.6813);">x1</div>
<div style="left:994px;top:71px;width:921px;height:836px;background:#fff;"></div>
<svg style="position:absolute;left:1001px;top:76px;" width="11" height="10" viewBox="1001 76 11 10"><rect x="1002" y="77" width="8" height="8" fill="#f0f0f0" stroke="#8a8a8a" stroke-width="0.8"/><rect x="1002" y="77" width="8" height="2.2" fill="#8a8a8a"/><ellipse cx="1006" cy="81.5" rx="2.8" ry="1.2" fill="#222"/></svg>
<div class="t" style="left:1016.00px;top:77.50px;font-family:'Liberation Sans', sans-serif;font-size:9.57px;line-height:9.57px;color:#8c8c8c;transform:scaleX(0.9253);">Stage Pattern - Untitled</div>
<div style="left:1826px;top:82px;width:7px;height:1px;background:#ececec;"></div>
<div style="left:1858px;top:78px;width:9px;height:8px;border:1px solid #777;border-radius:1px;"></div>
<svg style="position:absolute;left:1892px;top:77px;" width="10" height="10" viewBox="1892 77 10 10"><path d="M1893 78 l7.5 7.5 M1900.5 78 l-7.5 7.5" stroke="#6a6a6a" stroke-width="1"/></svg>
<div class="t" style="left:999.50px;top:96.83px;font-family:'Liberation Sans', sans-serif;font-size:10.00px;line-height:10.00px;color:#5a5a5a;transform:scaleX(0.8385);">File</div>
<div class="t" style="left:1023.80px;top:96.83px;font-family:'Liberation Sans', sans-serif;font-size:10.00px;line-height:10.00px;color:#5a5a5a;transform:scaleX(0.8232);">Edit</div>
<div class="t" style="left:1049.00px;top:96.83px;font-family:'Liberation Sans', sans-serif;font-size:10.00px;line-height:10.00px;color:#5a5a5a;transform:scaleX(0.8837);">View</div>
<div class="t" style="left:1078.00px;top:96.83px;font-family:'Liberation Sans', sans-serif;font-size:10.00px;line-height:10.00px;color:#5a5a5a;transform:scaleX(0.8992);">Pattern</div>
<div class="t" style="left:1117.50px;top:96.83px;font-family:'Liberation Sans', sans-serif;font-size:10.00px;line-height:10.00px;color:#5a5a5a;transform:scaleX(0.8222);">Stage</div>
<div style="left:994px;top:108px;width:921px;height:2px;background:#b4b4b4;"></div>
<div style="left:994px;top:110px;width:921px;height:29px;background:#f0f0f0;"></div>
<svg style="position:absolute;left:997px;top:111px;" width="4" height="27" viewBox="997 111 4 27"><rect x="998" y="112" width="1" height="1.3" fill="#7a7a7a"/><rect x="998" y="115" width="1" height="1.3" fill="#7a7a7a"/><rect x="998" y="118" width="1" height="1.3" fill="#7a7a7a"/><rect x="998" y="121" width="1" height="1.3" fill="#7a7a7a"/><rect x="998" y="124" width="1" height="1.3" fill="#7a7a7a"/><rect x="998" y="127" width="1" height="1.3" fill="#7a7a7a"/><rect x="998" y="130" width="1" height="1.3" fill="#7a7a7a"/><rect x="998" y="133" width="1" height="1.3" fill="#7a7a7a"/><rect x="998" y="136" width="1" height="1.3" fill="#7a7a7a"/></svg>
<svg style="position:absolute;left:1005px;top:114px;" width="20" height="20" viewBox="1005 113 20 20"><circle cx="1012" cy="120.5" r="5.2" fill="#d9ecff" stroke="#6a8fc8" stroke-width="1.3"/><path d="M1016 124.5 l5 5" stroke="#f0a020" stroke-width="2.8" stroke-linecap="round"/><path d="M1012 117.5 v6 M1009 120.5 h6" stroke="#1a9a1a" stroke-width="2.2"/></svg>
<svg style="position:absolute;left:1032px;top:114px;" width="20" height="20" viewBox="1032 113 20 20"><circle cx="1039" cy="120.5" r="5.2" fill="#d9ecff" stroke="#6a8fc8" stroke-width="1.3"/><path d="M1043 124.5 l5 5" stroke="#f0a020" stroke-width="2.8" stroke-linecap="round"/><path d="M1036 120.5 h6" stroke="#d02020" stroke-width="2.2"/></svg>
<svg style="position:absolute;left:1058px;top:114px;" width="20" height="21" viewBox="1058 113 20 21"><circle cx="1065" cy="120.5" r="5.2" fill="#d9ecff" stroke="#6a8fc8" stroke-width="1.3"/><path d="M1069 124.5 l5 5" stroke="#f0a020" stroke-width="2.8" stroke-linecap="round"/><path d="M1065 117.5 v6 M1062 120.5 h6" stroke="#1a9a1a" stroke-width="2.2"/><path d="M1059 130 l1.2 -2 l1.2 2 l-1.2 2z" fill="#7a2a10"/></svg>
<svg style="position:absolute;left:1084px;top:114px;" width="20" height="21" viewBox="1084 113 20 21"><circle cx="1091" cy="120.5" r="5.2" fill="#d9ecff" stroke="#6a8fc8" stroke-width="1.3"/><path d="M1095 124.5 l5 5" stroke="#f0a020" stroke-width="2.8" stroke-linecap="round"/><path d="M1091 117.5 v6 M1088 120.5 h6" stroke="#1a9a1a" stroke-width="2.2"/><path d="M1086 129 l1.2 -2 l1.2 2 l-1.2 2z M1091 131 l1.2 -2 l1.2 2 l-1.2 2z M1096 130 l1.2 -2 l1.2 2 l-1.2 2z" fill="#7a2a10"/></svg>
<svg style="position:absolute;left:1110px;top:115px;" width="19" height="19" viewBox="1110 114 19 19"><rect x="1111.5" y="115.5" width="16" height="16" fill="#fff" stroke="#2a5ab0" stroke-width="1.3"/><path d="M1119.5 115.5 v16 M1111.5 123.5 h16" stroke="#e84040" stroke-width="1"/><circle cx="1118" cy="122" r="3" fill="#cfe3ff" stroke="#6a8fc8" stroke-width="0.8"/></svg>
<svg style="position:absolute;left:1139px;top:115px;" width="16" height="18" viewBox="1139 114 16 18"><path d="M1142 125 q-2 -3 0 -4 l2 2 v-6 q1 -2 2 0 v4 v-5 q1 -2 2 0 v5 v-4 q1 -2 2 0 v4 v-2 q1 -1.5 2 0 v5 q0 4 -4 5 h-3z" fill="#fff" stroke="#222" stroke-width="1"/></svg>
<div style="left:1161px;top:113px;width:1px;height:23px;background:#c8c8c8;"></div>
<div style="left:1162px;top:113px;width:1px;height:23px;background:#fdfdfd;"></div>
<svg style="position:absolute;left:1172px;top:114px;" width="16" height="20" viewBox="1172 113 16 20"><path d="M1175 128 l5 -2.5 l5 2.5 v2.5 l-5 2.5 l-5 -2.5z" fill="#a8a8a8" stroke="#777" stroke-width="0.6"/><path d="M1179.5 128 l2 -9" stroke="#8a8a8a" stroke-width="2.8" stroke-linecap="round"/><circle cx="1181.8" cy="117.5" r="1.5" fill="#e03030"/><circle cx="1176.5" cy="127" r="0.9" fill="#e03030"/></svg>
<div style="left:1191px;top:113px;width:1px;height:23px;background:#c8c8c8;"></div>
<div style="left:1192px;top:113px;width:1px;height:23px;background:#fdfdfd;"></div>
<svg style="position:absolute;left:1195px;top:114px;" width="22" height="21" viewBox="1195 113 22 21"><path d="M1201.5 118.5 l-2.5 -2.5" stroke="#555" stroke-width="0.9"/><path d="M1201.5 128.5 l-2.5 2.5" stroke="#555" stroke-width="0.9"/><path d="M1211.5 118.5 l2.5 -2.5" stroke="#555" stroke-width="0.9"/><path d="M1211.5 128.5 l2.5 2.5" stroke="#555" stroke-width="0.9"/><path d="M1206.5 117 v13 M1200 123.5 h13" stroke="#8a2a10" stroke-width="1.6"/><circle cx="1206.5" cy="123.5" r="2" fill="#8a2a10"/></svg>
<svg style="position:absolute;left:1223px;top:114px;" width="22" height="21" viewBox="1223 113 22 21"><path d="M1227.5 118.5 l-2.5 -2.5" stroke="#555" stroke-width="0.9"/><path d="M1227.5 128.5 l-2.5 2.5" stroke="#555" stroke-width="0.9"/><path d="M1237.5 118.5 l2.5 -2.5" stroke="#555" stroke-width="0.9"/><path d="M1237.5 128.5 l2.5 2.5" stroke="#555" stroke-width="0.9"/><path d="M1229.0 119 v9" stroke="#444" stroke-width="0.8"/><path d="M1231.2 119 v9" stroke="#444" stroke-width="0.8"/><path d="M1233.4 119 v9" stroke="#444" stroke-width="0.8"/><path d="M1235.6 119 v9" stroke="#444" stroke-width="0.8"/><path d="M1228 120.0 h9" stroke="#444" stroke-width="0.8"/><path d="M1228 122.2 h9" stroke="#444" stroke-width="0.8"/><path d="M1228 124.4 h9" stroke="#444" stroke-width="0.8"/><path d="M1228 126.6 h9" stroke="#444" stroke-width="0.8"/></svg>
<svg style="position:absolute;left:1249px;top:114px;" width="22" height="21" viewBox="1249 113 22 21"><path d="M1253.5 118.5 l-2.5 -2.5" stroke="#555" stroke-width="0.9"/><path d="M1253.5 128.5 l-2.5 2.5" stroke="#555" stroke-width="0.9"/><path d="M1263.5 118.5 l2.5 -2.5" stroke="#555" stroke-width="0.9"/><path d="M1263.5 128.5 l2.5 2.5" stroke="#555" stroke-width="0.9"/><circle cx="1258.5" cy="123.5" r="5" fill="none" stroke="#444" stroke-width="1.2"/><path d="M1253.5 123.5 h10 M1258.5 118.5 v10" stroke="#444" stroke-width="0.8"/><ellipse cx="1258.5" cy="123.5" rx="2.4" ry="5" fill="none" stroke="#444" stroke-width="0.8"/></svg>
<svg style="position:absolute;left:1275px;top:114px;" width="22" height="21" viewBox="1275 113 22 21"><path d="M1280 118.5 l-2.5 -2.5" stroke="#555" stroke-width="0.9"/><path d="M1280 128.5 l-2.5 2.5" stroke="#555" stroke-width="0.9"/><path d="M1290 118.5 l2.5 -2.5" stroke="#555" stroke-width="0.9"/><path d="M1290 128.5 l2.5 2.5" stroke="#555" stroke-width="0.9"/><rect x="1281" y="119.5" width="8" height="8" fill="none" stroke="#222" stroke-width="1.6"/></svg>
<svg style="position:absolute;left:1301px;top:114px;" width="22" height="21" viewBox="1301 113 22 21"><path d="M1306.5 118.5 l-2.5 -2.5" stroke="#555" stroke-width="0.9"/><path d="M1306.5 128.5 l-2.5 2.5" stroke="#555" stroke-width="0.9"/><path d="M1316.5 118.5 l2.5 -2.5" stroke="#555" stroke-width="0.9"/><path d="M1316.5 128.5 l2.5 2.5" stroke="#555" stroke-width="0.9"/><path d="M1309 118 h5 l3 3 v5 l-3 3 h-5 l-3 -3 v-5z" fill="none" stroke="#222" stroke-width="1.6"/></svg>
<svg style="position:absolute;left:1327px;top:114px;" width="22" height="21" viewBox="1327 113 22 21"><path d="M1333 118.5 l-2.5 -2.5" stroke="#555" stroke-width="0.9"/><path d="M1333 128.5 l-2.5 2.5" stroke="#555" stroke-width="0.9"/><path d="M1343 118.5 l2.5 -2.5" stroke="#555" stroke-width="0.9"/><path d="M1343 128.5 l2.5 2.5" stroke="#555" stroke-width="0.9"/><circle cx="1338" cy="123.5" r="4" fill="none" stroke="#555" stroke-width="1"/><circle cx="1338" cy="123.5" r="2" fill="#333"/></svg>
<div style="left:1354px;top:113px;width:1px;height:23px;background:#c8c8c8;"></div>
<div style="left:1355px;top:113px;width:1px;height:23px;background:#fdfdfd;"></div>
<svg style="position:absolute;left:1359px;top:114px;" width="21" height="21" viewBox="1359 113 21 21"><rect x="1360.5" y="115.5" width="17" height="16" rx="2" fill="none" stroke="#666" stroke-width="1" stroke-dasharray="1.2 1.2"/><rect x="1364" y="120" width="10" height="6" rx="1.5" fill="#fff" stroke="#333" stroke-width="1.6"/></svg>
<svg style="position:absolute;left:1386px;top:114px;" width="20" height="20" viewBox="1386 113 20 20"><path d="M1389 117 l13 13 M1402 117 l-13 13" stroke="#8a8a8a" stroke-width="4" stroke-linecap="round"/></svg>
<svg style="position:absolute;left:1412px;top:114px;" width="21" height="21" viewBox="1412 113 21 21"><path d="M1414 121 v-5 h5 M1426 116 h5 v5 M1414 126 v5 h5 M1431 126 v5 h-5" stroke="#9a9a9a" stroke-width="1.6" fill="none"/><path d="M1414.5 116.5 l4 4 M1430.5 116.5 l-4 4 M1414.5 130.5 l4 -4 M1430.5 130.5 l-4 -4" stroke="#9a9a9a" stroke-width="1.4"/></svg>
<div style="left:1439px;top:113px;width:1px;height:23px;background:#c8c8c8;"></div>
<div style="left:1440px;top:113px;width:1px;height:23px;background:#fdfdfd;"></div>
<svg style="position:absolute;left:1443px;top:114px;" width="20" height="20" viewBox="1443 113 20 20"><path d="M1447 118 q-3 5 0 10 M1458 118 q3 5 0 10" stroke="#111" stroke-width="1.4" fill="none"/><ellipse cx="1452.5" cy="123" rx="3.5" ry="4.5" fill="none" stroke="#1a8a1a" stroke-width="1.6"/></svg>
<svg style="position:absolute;left:1470px;top:114px;" width="18" height="20" viewBox="1470 113 18 20"><path d="M1472 124 l7 -6.5 l7 6.5z" fill="#c4c4c4"/><rect x="1472" y="126" width="14" height="3" rx="1.5" fill="#c4c4c4"/></svg>
<div style="left:994px;top:138px;width:921px;height:752px;background:#fff;border-top:2px solid #3e3e3e;border-left:1px solid #1a1a2a;"></div>
<div style="left:995px;top:142px;width:920px;height:2px;background:#ff5e5e;"></div>
<div style="left:1392px;top:142px;width:2px;height:747px;background:#ff5e5e;"></div>
<div style="left:1632px;top:540px;width:16px;height:13px;border:1.5px solid #111;"></div>
<div style="left:994px;top:889px;width:921px;height:1px;background:#5a5a5a;"></div>
<div style="left:994px;top:890px;width:921px;height:17px;background:#f0f0f0;border-top:1px solid #fff;border-bottom:1px solid #fff;border-right:1px solid #fff;"></div>
<div style="left:998px;top:892px;width:103px;height:14px;border-left:1px solid #a0a0a0;border-top:1px solid #a0a0a0;border-right:1px solid #fff;border-bottom:1px solid #fff;"></div>
<div style="left:1103px;top:892px;width:47px;height:14px;border-left:1px solid #a0a0a0;border-top:1px solid #a0a0a0;border-right:1px solid #fff;border-bottom:1px solid #fff;"></div>
<div style="left:1151px;top:892px;width:55px;height:14px;border-left:1px solid #a0a0a0;border-top:1px solid #a0a0a0;border-right:1px solid #fff;border-bottom:1px solid #fff;"></div>
<div style="left:1207px;top:892px;width:48px;height:14px;border-left:1px solid #a0a0a0;border-top:1px solid #a0a0a0;border-right:1px solid #fff;border-bottom:1px solid #fff;"></div>
<div style="left:1256px;top:892px;width:13px;height:14px;border-left:1px solid #a0a0a0;border-top:1px solid #a0a0a0;border-right:1px solid #fff;border-bottom:1px solid #fff;"></div>
<div style="left:1270px;top:892px;width:58px;height:14px;border-left:1px solid #a0a0a0;border-top:1px solid #a0a0a0;border-right:1px solid #fff;border-bottom:1px solid #fff;"></div>
<div style="left:1329px;top:892px;width:47px;height:14px;border-left:1px solid #a0a0a0;border-top:1px solid #a0a0a0;border-right:1px solid #fff;border-bottom:1px solid #fff;"></div>
<svg style="position:absolute;left:999px;top:892px;" width="14" height="14" viewBox="999 892 14 14"><rect x="1005" y="897" width="6.5" height="7" stroke="#222" stroke-width="1.2" fill="none"/><path d="M1002 900 v5 M999.5 902.5 h5" stroke="#222" stroke-width="0.9"/><path d="M1006 894 h5" stroke="#222" stroke-width="1"/></svg>
<div class="t" style="left:1012.20px;top:893.41px;font-family:'Liberation Sans', sans-serif;font-size:10.14px;line-height:10.14px;color:#111;transform:scaleX(0.7902);">19929,-32960</div>
<svg style="position:absolute;left:1104px;top:892px;" width="10" height="14" viewBox="1104 892 10 14"><path d="M1108.5 893 v12 M1106 895 l2.5 2.5 l2.5 -2.5 M1106 903 l2.5 -2.5 l2.5 2.5" stroke="#222" stroke-width="1" fill="none"/></svg>
<div class="t" style="left:1116.20px;top:893.41px;font-family:'Liberation Sans', sans-serif;font-size:10.14px;line-height:10.14px;color:#111;transform:scaleX(0.8048);">9966.21:</div>
<svg style="position:absolute;left:1152px;top:892px;" width="12" height="14" viewBox="1152 892 12 14"><path d="M1157.5 894 v10 M1152.5 899 h10" stroke="#222" stroke-width="1.4"/></svg>
<svg style="position:absolute;left:1208px;top:892px;" width="14" height="14" viewBox="1208 892 14 14"><path d="M1209.5 893 v11.5 h11" stroke="#222" stroke-width="1.2" fill="none"/><path d="M1212 896 l6 6 M1218 898 v4 h-4" stroke="#222" stroke-width="1" fill="none"/></svg>
<div class="t" style="left:1257.80px;top:893.41px;font-family:'Liberation Sans', sans-serif;font-size:10.14px;line-height:10.14px;color:#a8a8a8;transform:scaleX(0.7361);">LF</div>
<svg style="position:absolute;left:1271px;top:892px;" width="14" height="14" viewBox="1271 892 14 14"><path d="M1273 894.5 l9 9 M1273 894.5 v4 M1273 894.5 h4 M1282 903.5 v-4 M1282 903.5 h-4" stroke="#222" stroke-width="1.2" fill="none"/></svg>
<div class="t" style="left:1330.00px;top:893.41px;font-family:'Liberation Sans', sans-serif;font-size:10.14px;line-height:10.14px;color:#111;transform:scaleX(0.8267);">SLOW</div>
<svg style="position:absolute;left:34px;top:125px;" width="954" height="766" viewBox="34 125 954 766"><rect x="34" y="125" width="954" height="766" fill="#1f1e21"/><rect x="34" y="205" width="954" height="35" fill="#1a191c"/><rect x="34" y="345" width="954" height="20" fill="#1c1b1e"/><rect x="34" y="560" width="954" height="18" fill="#1c1b1e"/><rect x="34" y="640" width="954" height="25" fill="#1b1a1d"/><rect x="34" y="860" width="954" height="31" fill="#1c1b1e"/><rect x="124.50" y="139" width="7.68" height="28.5" fill="#cac9cd"/><rect x="141.76" y="139" width="16.31" height="28.5" fill="#cac9cd"/><rect x="167.65" y="139" width="16.31" height="28.5" fill="#cac9cd"/><rect x="193.54" y="139" width="7.68" height="28.5" fill="#cac9cd"/><rect x="219.43" y="139" width="7.68" height="28.5" fill="#cac9cd"/><rect x="236.69" y="139" width="7.68" height="28.5" fill="#cac9cd"/><rect x="253.95" y="139" width="16.31" height="28.5" fill="#cac9cd"/><rect x="279.84" y="139" width="16.31" height="28.5" fill="#cac9cd"/><rect x="314.36" y="139" width="7.68" height="28.5" fill="#cac9cd"/><rect x="331.62" y="139" width="7.68" height="28.5" fill="#cac9cd"/><rect x="348.88" y="139" width="7.68" height="28.5" fill="#cac9cd"/><rect x="366.14" y="139" width="7.68" height="28.5" fill="#cac9cd"/><rect x="383.40" y="139" width="7.68" height="28.5" fill="#cac9cd"/><rect x="409.29" y="139" width="16.31" height="28.5" fill="#cac9cd"/><rect x="435.18" y="139" width="16.31" height="28.5" fill="#cac9cd"/><rect x="461.07" y="139" width="7.68" height="28.5" fill="#cac9cd"/><rect x="478.33" y="139" width="16.31" height="28.5" fill="#cac9cd"/><rect x="504.22" y="139" width="7.68" height="28.5" fill="#cac9cd"/><rect x="530.11" y="139" width="7.68" height="28.5" fill="#cac9cd"/><rect x="547.37" y="139" width="16.31" height="28.5" fill="#cac9cd"/><rect x="573.26" y="139" width="16.31" height="28.5" fill="#cac9cd"/><rect x="599.15" y="139" width="7.68" height="28.5" fill="#cac9cd"/><rect x="616.41" y="139" width="7.68" height="28.5" fill="#cac9cd"/><rect x="642.30" y="139" width="16.31" height="28.5" fill="#cac9cd"/><rect x="668.19" y="139" width="7.68" height="28.5" fill="#cac9cd"/><rect x="685.45" y="139" width="16.31" height="28.5" fill="#cac9cd"/><rect x="711.34" y="139" width="7.68" height="28.5" fill="#cac9cd"/><rect x="728.60" y="139" width="7.68" height="28.5" fill="#cac9cd"/><rect x="754.49" y="139" width="16.31" height="28.5" fill="#cac9cd"/><rect x="780.38" y="139" width="7.68" height="28.5" fill="#cac9cd"/><rect x="797.64" y="139" width="7.68" height="28.5" fill="#cac9cd"/><rect x="814.90" y="139" width="16.31" height="28.5" fill="#cac9cd"/><rect x="840.79" y="139" width="16.31" height="28.5" fill="#cac9cd"/><rect x="866.68" y="139" width="7.68" height="28.5" fill="#cac9cd"/><rect x="892.57" y="139" width="7.68" height="28.5" fill="#cac9cd"/><rect x="109" y="147.3" width="809" height="1.5" fill="#d8cc2a"/><path fill-rule="evenodd" fill="#cac9cd" d="M132 204H894V813H132Z M174 238V779H851V238Z"/><path fill-rule="evenodd" fill="#cac9cd" d="M243.5 293H782V724H243.5Z M279 321V696H747.5V321Z"/><path fill-rule="evenodd" fill="#cac9cd" d="M323 357H703V660H323Z M343.4 373V644H682.3V373Z"/><path fill-rule="evenodd" fill="#cac9cd" d="M380 403H645.4V614.6H380Z M393.5 413.5V604H631.5V413.5Z"/><path fill-rule="evenodd" fill="#cac9cd" d="M437 448H589V569.7H437Z M444.9 454.9V562.6H581.1V454.9Z"/><path fill-rule="evenodd" fill="#cac9cd" d="M455.3 462.3H570.7V554.8H455.3Z M463 469.2V547.7H563V469.2Z"/><path fill-rule="evenodd" fill="#cac9cd" d="M474.7 477.9H551.3V539.9H474.7Z M480 482.2V535.3H546V482.2Z"/><path fill-rule="evenodd" fill="#cac9cd" d="M483.2 484.7H542.2V532.7H483.2Z M488.4 489.3V528.2H537.7V489.3Z"/><path fill-rule="evenodd" fill="#cac9cd" d="M492.3 491.9H533.1V525.6H492.3Z M497.4 496.4V521H528.6V496.4Z"/><path fill-rule="evenodd" fill="#cac9cd" d="M500.7 499.7H525.3V517.8H500.7Z M504 502.9V514.6H521.4V502.9Z"/><rect x="507" y="504.5" width="11" height="8" fill="#cac9cd"/><rect x="509" y="506" width="7.5" height="5" fill="#232225"/><circle cx="153.00" cy="221" r="9.7" fill="#800080"/><circle cx="180.63" cy="221" r="9.7" fill="#800080"/><circle cx="208.26" cy="221" r="9.7" fill="#800080"/><circle cx="235.89" cy="221" r="9.7" fill="#800080"/><circle cx="263.52" cy="221" r="9.7" fill="#800080"/><circle cx="291.15" cy="221" r="9.7" fill="#800080"/><circle cx="318.78" cy="221" r="9.7" fill="#800080"/><circle cx="346.41" cy="221" r="9.7" fill="#800080"/><circle cx="374.04" cy="221" r="9.7" fill="#800080"/><circle cx="401.67" cy="221" r="9.7" fill="#800080"/><circle cx="624.70" cy="796" r="9.7" fill="#800080"/><circle cx="652.33" cy="796" r="9.7" fill="#800080"/><circle cx="679.96" cy="796" r="9.7" fill="#800080"/><circle cx="707.59" cy="796" r="9.7" fill="#800080"/><circle cx="735.22" cy="796" r="9.7" fill="#800080"/><circle cx="762.85" cy="796" r="9.7" fill="#800080"/><circle cx="790.48" cy="796" r="9.7" fill="#800080"/><circle cx="818.11" cy="796" r="9.7" fill="#800080"/><circle cx="845.74" cy="796" r="9.7" fill="#800080"/><circle cx="873.37" cy="796" r="9.7" fill="#800080"/><circle cx="261.30" cy="307.3" r="8.4" fill="#800080"/><circle cx="284.30" cy="307.3" r="8.4" fill="#800080"/><circle cx="307.30" cy="307.3" r="8.4" fill="#800080"/><circle cx="330.30" cy="307.3" r="8.4" fill="#800080"/><circle cx="353.30" cy="307.3" r="8.4" fill="#800080"/><circle cx="376.30" cy="307.3" r="8.4" fill="#800080"/><circle cx="399.30" cy="307.3" r="8.4" fill="#800080"/><circle cx="422.30" cy="307.3" r="8.4" fill="#800080"/><circle cx="445.30" cy="307.3" r="8.4" fill="#800080"/><circle cx="581.40" cy="709.8" r="8.4" fill="#800080"/><circle cx="604.41" cy="709.8" r="8.4" fill="#800080"/><circle cx="627.42" cy="709.8" r="8.4" fill="#800080"/><circle cx="650.43" cy="709.8" r="8.4" fill="#800080"/><circle cx="673.44" cy="709.8" r="8.4" fill="#800080"/><circle cx="696.45" cy="709.8" r="8.4" fill="#800080"/><circle cx="719.46" cy="709.8" r="8.4" fill="#800080"/><circle cx="742.47" cy="709.8" r="8.4" fill="#800080"/><circle cx="765.48" cy="709.8" r="8.4" fill="#800080"/><circle cx="333.30" cy="365" r="5.4" fill="#800080"/><circle cx="347.10" cy="365" r="5.4" fill="#800080"/><circle cx="360.90" cy="365" r="5.4" fill="#800080"/><circle cx="374.70" cy="365" r="5.4" fill="#800080"/><circle cx="388.50" cy="365" r="5.4" fill="#800080"/><circle cx="402.30" cy="365" r="5.4" fill="#800080"/><circle cx="416.10" cy="365" r="5.4" fill="#800080"/><circle cx="429.90" cy="365" r="5.4" fill="#800080"/><circle cx="596.50" cy="652" r="5.4" fill="#800080"/><circle cx="610.30" cy="652" r="5.4" fill="#800080"/><circle cx="624.10" cy="652" r="5.4" fill="#800080"/><circle cx="637.90" cy="652" r="5.4" fill="#800080"/><circle cx="651.70" cy="652" r="5.4" fill="#800080"/><circle cx="665.50" cy="652" r="5.4" fill="#800080"/><circle cx="679.30" cy="652" r="5.4" fill="#800080"/><circle cx="693.10" cy="652" r="5.4" fill="#800080"/><circle cx="386.70" cy="408" r="3.5" fill="#232225"/><circle cx="395.95" cy="408" r="3.5" fill="#232225"/><circle cx="405.20" cy="408" r="3.5" fill="#232225"/><circle cx="414.45" cy="408" r="3.5" fill="#232225"/><circle cx="423.70" cy="408" r="3.5" fill="#232225"/><circle cx="432.95" cy="408" r="3.5" fill="#232225"/><circle cx="442.20" cy="408" r="3.5" fill="#232225"/><circle cx="584.50" cy="609" r="3.5" fill="#232225"/><circle cx="593.50" cy="609" r="3.5" fill="#232225"/><circle cx="602.50" cy="609" r="3.5" fill="#232225"/><circle cx="611.50" cy="609" r="3.5" fill="#232225"/><circle cx="620.50" cy="609" r="3.5" fill="#232225"/><circle cx="629.50" cy="609" r="3.5" fill="#232225"/><circle cx="638.50" cy="609" r="3.5" fill="#232225"/><circle cx="440.70" cy="451.3" r="2.4" fill="#232225"/><circle cx="446.60" cy="451.3" r="2.4" fill="#232225"/><circle cx="452.50" cy="451.3" r="2.4" fill="#232225"/><circle cx="458.40" cy="451.3" r="2.4" fill="#232225"/><circle cx="464.30" cy="451.3" r="2.4" fill="#232225"/><circle cx="470.20" cy="451.3" r="2.4" fill="#232225"/><circle cx="557.00" cy="566" r="2.4" fill="#232225"/><circle cx="562.90" cy="566" r="2.4" fill="#232225"/><circle cx="568.80" cy="566" r="2.4" fill="#232225"/><circle cx="574.70" cy="566" r="2.4" fill="#232225"/><circle cx="580.60" cy="566" r="2.4" fill="#232225"/><circle cx="586.50" cy="566" r="2.4" fill="#232225"/><circle cx="458.50" cy="465.7" r="2.2" fill="#232225"/><circle cx="463.80" cy="465.7" r="2.2" fill="#232225"/><circle cx="469.10" cy="465.7" r="2.2" fill="#232225"/><circle cx="474.40" cy="465.7" r="2.2" fill="#232225"/><circle cx="479.70" cy="465.7" r="2.2" fill="#232225"/><circle cx="485.00" cy="465.7" r="2.2" fill="#232225"/><circle cx="543.50" cy="551.5" r="2.2" fill="#232225"/><circle cx="548.80" cy="551.5" r="2.2" fill="#232225"/><circle cx="554.10" cy="551.5" r="2.2" fill="#232225"/><circle cx="559.40" cy="551.5" r="2.2" fill="#232225"/><circle cx="564.70" cy="551.5" r="2.2" fill="#232225"/><circle cx="570.00" cy="551.5" r="2.2" fill="#232225"/><circle cx="476.8" cy="480.50" r="1.5" fill="#232225"/><circle cx="476.8" cy="484.10" r="1.5" fill="#232225"/><circle cx="476.8" cy="487.70" r="1.5" fill="#232225"/><circle cx="476.8" cy="491.30" r="1.5" fill="#232225"/><circle cx="485.8" cy="487.00" r="1.5" fill="#232225"/><circle cx="485.8" cy="490.60" r="1.5" fill="#232225"/><circle cx="485.8" cy="494.20" r="1.5" fill="#232225"/><circle cx="485.8" cy="497.80" r="1.5" fill="#232225"/><circle cx="494.6" cy="494.00" r="1.4" fill="#232225"/><circle cx="494.6" cy="497.60" r="1.4" fill="#232225"/><circle cx="548.8" cy="524.00" r="1.5" fill="#232225"/><circle cx="548.8" cy="527.60" r="1.5" fill="#232225"/><circle cx="548.8" cy="531.20" r="1.5" fill="#232225"/><circle cx="548.8" cy="534.80" r="1.5" fill="#232225"/><circle cx="539.9" cy="519.00" r="1.5" fill="#232225"/><circle cx="539.9" cy="522.60" r="1.5" fill="#232225"/><circle cx="539.9" cy="526.20" r="1.5" fill="#232225"/><circle cx="539.9" cy="529.80" r="1.5" fill="#232225"/><circle cx="530.7" cy="512.50" r="1.4" fill="#232225"/><circle cx="530.7" cy="516.10" r="1.4" fill="#232225"/><path fill="#cac9cd" d="M198.4 293.7H204.61V301.566H212.89V293.7H219.1V314.4H212.89V306.948H204.61V314.4H198.4Z"/><path fill="#cac9cd" d="M806 292.8H812.48V300.704H821.12V292.8H827.6V313.6H821.12V306.112H812.48V313.6H806Z"/><path fill="#cac9cd" d="M199.4 704H205.55V711.98H213.75V704H219.9V725H213.75V717.44H205.55V725H199.4Z"/><path fill="#cac9cd" d="M806.5 703.2H812.92V711.104H821.48V703.2H827.9V724H821.48V716.5120000000001H812.92V724H806.5Z"/><path fill="#232225" d="M149.975 584H158.5V628.6H149.975Z M143 584H158.5V592.92H143Z"/><path fill-rule="evenodd" fill="#232225" d="M140.5 641H167V685H140.5Z M150 650V675.5H157.3V650Z"/><path fill-rule="evenodd" fill="#232225" d="M140.5 697H167V740.5H140.5Z M150 706V731H157.3V706Z"/><path fill-rule="evenodd" fill="#232225" d="M140.5 752.5H167V797H140.5Z M150 761.5V787H157.3V761.5Z"/><path fill="#232225" d="M865 220H880V231H874V264H865Z"/><path fill-rule="evenodd" fill="#232225" d="M857 276H883.5V319H857Z M866 285V310H874.4V285Z"/><path fill-rule="evenodd" fill="#232225" d="M857 332.4H883.5V375.4H857Z M866 341.4V366.4H874.4V341.4Z"/><path fill-rule="evenodd" fill="#232225" d="M857 388.6H883.5V431.7H857Z M866 397.6V422.7H874.4V397.6Z"/><path fill="#232225" d="M250 580.5H271.6V588.706L261.88 617.8H251.08L261.88 589.452H250Z"/><path fill-rule="evenodd" fill="#232225" d="M250 627.4H272V663.5H250Z M257.5 635V656H264.5V635Z"/><path fill-rule="evenodd" fill="#232225" d="M250 674.3H272V710.4H250Z M257.5 682V703H264.5V682Z"/><path fill="#232225" d="M754.3 306.7H775.8V314H766L775.8 342.8H767.5L757 314H754.3Z"/><path fill-rule="evenodd" fill="#232225" d="M753.6 353.2H775.8V389.3H753.6Z M760.6 360.8V381.7H768.2V360.8Z"/><path fill-rule="evenodd" fill="#232225" d="M753.6 400.4H775.8V436.5H753.6Z M760.6 408V429H768.2V408Z"/><path fill="#232225" d="M326 574.6H340.4V578.78H330.032V582.63H340.4V596.6H326V592.4200000000001H336.368V586.8100000000001H326Z"/><path fill-rule="evenodd" fill="#232225" d="M326 602.7H340.4V624.6H326Z M330.896 607.08V620.22H335.50399999999996V607.08Z"/><path fill-rule="evenodd" fill="#232225" d="M326 630.8H340.4V652.7H326Z M330.896 635.18V648.32H335.50399999999996V635.18Z"/><path fill="#232225" d="M685.7 364.4H699.5V377.252H689.5640000000001V381.896H699.5V386H685.7V373.14799999999997H695.636V368.50399999999996H685.7Z"/><path fill-rule="evenodd" fill="#232225" d="M685.7 392.7H699.5V413.8H685.7Z M690.392 396.92V409.58H694.808V396.92Z"/><path fill-rule="evenodd" fill="#232225" d="M685.7 421H699.5V442H685.7Z M690.392 425.2V437.8H694.808V425.2Z"/><path fill="#232225" d="M382.6 557H392.2V572.2H382.6V569.312H389.32V566.044H384.32800000000003V563.1560000000001H389.32V559.888H382.6Z"/><path fill="#232225" d="M382.6 576.3H392.2V579.093H385.288V581.6655H392.2V591H382.6V588.207H389.512V584.4585000000001H382.6Z"/><path fill-rule="evenodd" fill="#232225" d="M382.6 594.8H392.2V610H382.6Z M385.86400000000003 597.8399999999999V606.96H388.936V597.8399999999999Z"/><path fill="#232225" d="M634.2 407.5H643.4V410.312H636.96V413.49399999999997H641.744V416.306H636.96V419.488H643.4V422.3H634.2Z"/><path fill="#232225" d="M634.2 426.4H643.4V435.5035H636.7760000000001V438.793H643.4V441.7H634.2V432.59649999999993H640.824V429.30699999999996H634.2Z"/><path fill-rule="evenodd" fill="#232225" d="M634.2 444.8H643.4V460.1H634.2Z M637.328 447.86V457.04H640.272V447.86Z"/><path fill="#232225" d="M440 542H444.5V547.355H441.26V549.29H444.5V551H440V545.645H443.24V543.71H440Z"/><path fill-rule="evenodd" fill="#232225" d="M440 553H444.5V559H440Z M441.53 554.2V557.8H442.97V554.2Z"/><path fill-rule="evenodd" fill="#232225" d="M440 560.5H444.5V566H440Z M441.53 561.6V564.9H442.97V561.6Z"/><path fill-rule="evenodd" fill="#232225" d="M583 451.5H587.5V458H583Z M584.53 452.8V456.7H585.97V452.8Z"/><path fill-rule="evenodd" fill="#232225" d="M583 460H587.5V466H583Z M584.53 461.2V464.8H585.97V461.2Z"/><path fill-rule="evenodd" fill="#232225" d="M583 468H587.5V474H583Z M584.53 469.2V472.8H585.97V469.2Z"/><path fill="#232225" d="M459.075 526H461V533H459.075Z M457.5 526H461V527.4H457.5Z"/><path fill="#232225" d="M457.5 535H461.5V536.14H458.62V537.1899999999999H461.5V541H457.5V539.86H460.38V538.33H457.5Z"/><path fill-rule="evenodd" fill="#232225" d="M457.5 543H461.5V549H457.5Z M458.86 544.2V547.8H460.14V544.2Z"/><path fill="#232225" d="M565.35 465.5H568.5V466.93H565.35Z M565.525 465.5H567.1V472H565.525Z"/><path fill="#232225" d="M565 474H569V477.57H566.12V478.86H569V480H565V476.43H567.88V475.14H565Z"/><path fill-rule="evenodd" fill="#232225" d="M565 482H569V488H565Z M566.36 483.2V486.8H567.64V483.2Z"/><rect x="129.9" y="486.8" width="47.80" height="6.50" fill="#0000ff"/><rect x="129.9" y="495.6" width="47.80" height="6.80" fill="#0000ff"/><rect x="129.9" y="504.8" width="47.80" height="6.90" fill="#0000ff"/><rect x="129.9" y="513.8" width="47.80" height="6.80" fill="#0000ff"/><rect x="129.9" y="522.8" width="47.80" height="6.80" fill="#0000ff"/><rect x="849" y="486.8" width="48.00" height="6.50" fill="#0000ff"/><rect x="849" y="495.6" width="48.00" height="6.80" fill="#0000ff"/><rect x="849" y="504.8" width="48.00" height="6.90" fill="#0000ff"/><rect x="849" y="513.8" width="48.00" height="6.80" fill="#0000ff"/><rect x="849" y="522.8" width="48.00" height="6.80" fill="#0000ff"/><rect x="241.2" y="486.8" width="40.60" height="6.50" fill="#ff0000"/><rect x="241.2" y="495.6" width="40.60" height="6.80" fill="#ff0000"/><rect x="241.2" y="504.8" width="40.60" height="6.90" fill="#ff0000"/><rect x="241.2" y="513.8" width="40.60" height="6.80" fill="#ff0000"/><rect x="241.2" y="522.8" width="40.60" height="6.80" fill="#ff0000"/><rect x="744.4" y="486.8" width="41.40" height="6.50" fill="#ff0000"/><rect x="744.4" y="495.6" width="41.40" height="6.80" fill="#ff0000"/><rect x="744.4" y="504.8" width="41.40" height="6.90" fill="#ff0000"/><rect x="744.4" y="513.8" width="41.40" height="6.80" fill="#ff0000"/><rect x="744.4" y="522.8" width="41.40" height="6.80" fill="#ff0000"/><rect x="34" y="507.6" width="82.50" height="3" fill="#ececec"/><rect x="182.6" y="507.6" width="52.70" height="3" fill="#ececec"/><rect x="287" y="507.6" width="27.70" height="3" fill="#ececec"/><rect x="351.2" y="507.6" width="21.10" height="3" fill="#ececec"/><rect x="401.8" y="507.6" width="26.70" height="3" fill="#ececec"/><rect x="596.8" y="507.6" width="27.00" height="3" fill="#ececec"/><rect x="653.6" y="507.6" width="20.40" height="3" fill="#ececec"/><rect x="711" y="507.6" width="28.00" height="3" fill="#ececec"/><rect x="790" y="507.6" width="54.00" height="3" fill="#ececec"/><rect x="908.7" y="507.6" width="79.30" height="3" fill="#ececec"/><rect x="512.2" y="244.6" width="2.4" height="40.40" fill="#ececec"/><rect x="512.2" y="329" width="2.4" height="19.40" fill="#ececec"/><rect x="512.2" y="376.6" width="2.4" height="19.40" fill="#ececec"/><rect x="512.2" y="417" width="2.4" height="17.60" fill="#ececec"/><rect x="512.2" y="574.7" width="2.4" height="25.00" fill="#ececec"/><rect x="512.2" y="621" width="2.4" height="18.00" fill="#ececec"/><rect x="512.2" y="669.4" width="2.4" height="17.90" fill="#ececec"/><rect x="512.2" y="732" width="2.4" height="39.30" fill="#ececec"/><rect x="512.2" y="828.4" width="2.4" height="62.60" fill="#ececec"/><rect x="511.2" y="125" width="1.6" height="766" fill="#1a8a2a"/><rect x="34" y="506.9" width="954" height="1.8" fill="#1a8a2a"/><rect x="508.5" y="164.8" width="7" height="1.2" fill="#1a8a2a"/><rect x="508.5" y="203.3" width="7" height="1.2" fill="#1a8a2a"/><rect x="508.5" y="241.8" width="7" height="1.2" fill="#1a8a2a"/><rect x="508.5" y="280.3" width="7" height="1.2" fill="#1a8a2a"/><rect x="508.5" y="318.8" width="7" height="1.2" fill="#1a8a2a"/><rect x="508.5" y="357.3" width="7" height="1.2" fill="#1a8a2a"/><rect x="508.5" y="395.8" width="7" height="1.2" fill="#1a8a2a"/><rect x="508.5" y="434.3" width="7" height="1.2" fill="#1a8a2a"/><rect x="508.5" y="472.8" width="7" height="1.2" fill="#1a8a2a"/><rect x="508.5" y="549.8" width="7" height="1.2" fill="#1a8a2a"/><rect x="508.5" y="588.3" width="7" height="1.2" fill="#1a8a2a"/><rect x="508.5" y="626.8" width="7" height="1.2" fill="#1a8a2a"/><rect x="508.5" y="665.3" width="7" height="1.2" fill="#1a8a2a"/><rect x="508.5" y="703.8" width="7" height="1.2" fill="#1a8a2a"/><rect x="508.5" y="742.3" width="7" height="1.2" fill="#1a8a2a"/><rect x="508.5" y="780.8" width="7" height="1.2" fill="#1a8a2a"/><rect x="508.5" y="819.3" width="7" height="1.2" fill="#1a8a2a"/><rect x="508.5" y="857.8" width="7" height="1.2" fill="#1a8a2a"/><rect x="38.5" y="504" width="1.3" height="7.5" fill="#1a8a2a"/><rect x="85.8" y="504" width="1.3" height="7.5" fill="#1a8a2a"/><rect x="133.1" y="504" width="1.3" height="7.5" fill="#1a8a2a"/><rect x="180.4" y="504" width="1.3" height="7.5" fill="#1a8a2a"/><rect x="227.7" y="504" width="1.3" height="7.5" fill="#1a8a2a"/><rect x="275.0" y="504" width="1.3" height="7.5" fill="#1a8a2a"/><rect x="322.3" y="504" width="1.3" height="7.5" fill="#1a8a2a"/><rect x="369.6" y="504" width="1.3" height="7.5" fill="#1a8a2a"/><rect x="416.9" y="504" width="1.3" height="7.5" fill="#1a8a2a"/><rect x="464.2" y="504" width="1.3" height="7.5" fill="#1a8a2a"/><rect x="558.8" y="504" width="1.3" height="7.5" fill="#1a8a2a"/><rect x="606.1" y="504" width="1.3" height="7.5" fill="#1a8a2a"/><rect x="653.4" y="504" width="1.3" height="7.5" fill="#1a8a2a"/><rect x="700.7" y="504" width="1.3" height="7.5" fill="#1a8a2a"/><rect x="748.0" y="504" width="1.3" height="7.5" fill="#1a8a2a"/><rect x="795.3" y="504" width="1.3" height="7.5" fill="#1a8a2a"/><rect x="842.6" y="504" width="1.3" height="7.5" fill="#1a8a2a"/><rect x="889.9" y="504" width="1.3" height="7.5" fill="#1a8a2a"/><rect x="937.2" y="504" width="1.3" height="7.5" fill="#1a8a2a"/><rect x="984.5" y="504" width="1.3" height="7.5" fill="#1a8a2a"/><circle cx="511.8" cy="508.3" r="8.3" fill="none" stroke="#1a9a2a" stroke-width="1.2"/></svg>
<div style="left:1015px;top:155px;width:248px;height:156px;background:#f0f0f0;border:1px solid #b0b0b0;box-shadow:1px 2px 9px rgba(0,0,0,0.22);"></div>
<div style="left:1016px;top:156px;width:246px;height:19px;background:#fff;"></div>
<div class="t" style="left:1018.00px;top:159.84px;font-family:'Liberation Sans', sans-serif;font-size:10.00px;line-height:10.00px;color:#9a9a9a;transform:scaleX(0.9010);">Video Input Calibration</div>
<div style="left:1019px;top:183px;width:161px;height:16px;border-top:1px solid #6a6a6a;border-left:1px solid #6a6a6a;border-bottom:1px solid #fcfcfc;border-right:1px solid #fcfcfc;"></div>
<div class="t" style="left:1022.50px;top:184.78px;font-family:'Liberation Sans', sans-serif;font-size:9.71px;line-height:9.71px;color:#111;transform:scaleX(0.8277);">Clemex L 1.3M #12030576</div>
<div class="t" style="left:1025.50px;top:199.78px;font-family:'Liberation Sans', sans-serif;font-size:9.71px;line-height:9.71px;color:#111;transform:scaleX(0.8006);">Magnif.</div>
<div class="t" style="left:1078.30px;top:200.64px;font-family:'Liberation Sans', sans-serif;font-size:8.70px;line-height:8.70px;color:#111;transform:scaleX(0.9427);">µm/pixel</div>
<div style="left:1022px;top:210px;width:169px;height:71px;background:#fff;border:1px solid #828282;"></div>
<div style="left:1024px;top:222px;width:153px;height:10px;background:#0078d7;"></div>
<div class="t" style="left:1027.00px;top:211.90px;font-family:'Liberation Sans', sans-serif;font-size:9.57px;line-height:9.57px;color:#111;transform:scaleX(0.8178);">25x [SC]</div>
<div class="t" style="left:1080.00px;top:211.90px;font-family:'Liberation Sans', sans-serif;font-size:9.57px;line-height:9.57px;color:#111;transform:scaleX(0.8360);">2.089799881</div>
<div class="t" style="left:1027.00px;top:222.40px;font-family:'Liberation Sans', sans-serif;font-size:9.57px;line-height:9.57px;color:#fff;transform:scaleX(0.8178);">50x [SC]</div>
<div class="t" style="left:1080.00px;top:222.40px;font-family:'Liberation Sans', sans-serif;font-size:9.57px;line-height:9.57px;color:#fff;transform:scaleX(0.8360);">1.042299986</div>
<div class="t" style="left:1027.00px;top:232.70px;font-family:'Liberation Sans', sans-serif;font-size:9.57px;line-height:9.57px;color:#111;transform:scaleX(0.8335);">100x [SC]</div>
<div class="t" style="left:1080.00px;top:232.70px;font-family:'Liberation Sans', sans-serif;font-size:9.57px;line-height:9.57px;color:#111;transform:scaleX(0.8360);">0.518999994</div>
<div class="t" style="left:1027.00px;top:243.20px;font-family:'Liberation Sans', sans-serif;font-size:9.57px;line-height:9.57px;color:#111;transform:scaleX(0.8335);">200x [SC]</div>
<div class="t" style="left:1080.00px;top:243.20px;font-family:'Liberation Sans', sans-serif;font-size:9.57px;line-height:9.57px;color:#111;transform:scaleX(0.8360);">0.260399997</div>
<div class="t" style="left:1027.00px;top:253.60px;font-family:'Liberation Sans', sans-serif;font-size:9.57px;line-height:9.57px;color:#111;transform:scaleX(0.8335);">500x [SC]</div>
<div class="t" style="left:1080.00px;top:253.60px;font-family:'Liberation Sans', sans-serif;font-size:9.57px;line-height:9.57px;color:#111;transform:scaleX(0.8360);">0.104230002</div>
<div class="t" style="left:1027.00px;top:263.90px;font-family:'Liberation Sans', sans-serif;font-size:9.57px;line-height:9.57px;color:#111;transform:scaleX(0.8245);">1000x [SC]</div>
<div class="t" style="left:1080.00px;top:263.90px;font-family:'Liberation Sans', sans-serif;font-size:9.57px;line-height:9.57px;color:#111;transform:scaleX(0.8360);">0.051989999</div>
<div style="left:1024px;top:222px;width:153px;height:10px;border:1px dotted rgba(255,255,255,0.6);"></div>
<div style="left:1177px;top:211px;width:13px;height:69px;background:#f0f0f0;"></div>
<div style="left:1178px;top:225px;width:11px;height:35px;background:#cdcdcd;"></div>
<svg style="position:absolute;left:1179px;top:214px;" width="10" height="8" viewBox="1179 214 10 8"><path d="M1180.5 220 l3.5 -3.5 l3.5 3.5" stroke="#606060" stroke-width="1.2" fill="none"/></svg>
<svg style="position:absolute;left:1179px;top:269px;" width="10" height="8" viewBox="1179 269 10 8"><path d="M1180.5 271 l3.5 3.5 l3.5 -3.5" stroke="#606060" stroke-width="1.2" fill="none"/></svg>
<div style="left:1201px;top:182px;width:52px;height:15px;background:#e1e1e1;border:1px solid #b9b9b9;"></div>
<div class="t" style="left:1220.80px;top:184.53px;font-family:'Liberation Sans', sans-serif;font-size:10.00px;line-height:10.00px;color:#111;transform:scaleX(0.8097);">OK</div>
<div style="left:1201px;top:199px;width:52px;height:15px;background:#e1e1e1;border:1px solid #b9b9b9;"></div>
<div class="t" style="left:1214.50px;top:201.53px;font-family:'Liberation Sans', sans-serif;font-size:10.00px;line-height:10.00px;color:#111;transform:scaleX(0.8026);">Cancel</div>
<div style="left:1201px;top:225px;width:52px;height:15px;background:#e1e1e1;border:1px solid #b9b9b9;"></div>
<div class="t" style="left:1216.00px;top:227.34px;font-family:'Liberation Sans', sans-serif;font-size:10.00px;line-height:10.00px;color:#111;transform:scaleX(0.8222);">Add...</div>
<div style="left:1201px;top:242px;width:52px;height:15px;background:#e1e1e1;border:1px solid #b9b9b9;"></div>
<div class="t" style="left:1216.50px;top:244.84px;font-family:'Liberation Sans', sans-serif;font-size:10.00px;line-height:10.00px;color:#111;transform:scaleX(0.7906);">Edit...</div>
<div style="left:1201px;top:259px;width:52px;height:15px;background:#e1e1e1;border:1px solid #b9b9b9;"></div>
<div class="t" style="left:1215.00px;top:261.84px;font-family:'Liberation Sans', sans-serif;font-size:10.00px;line-height:10.00px;color:#111;transform:scaleX(0.8201);">Delete</div>
<div style="left:1201px;top:285px;width:52px;height:16px;background:#e1e1e1;border:1px solid #b9b9b9;"></div>
<div class="t" style="left:1212.80px;top:288.24px;font-family:'Liberation Sans', sans-serif;font-size:10.00px;line-height:10.00px;color:#111;transform:scaleX(0.7629);">Import...</div>
<div style="left:1023px;top:285px;width:63px;height:16px;background:#e1e1e1;border:1px solid #b9b9b9;"></div>
<div class="t" style="left:1025.80px;top:288.24px;font-family:'Liberation Sans', sans-serif;font-size:10.00px;line-height:10.00px;color:#111;transform:scaleX(0.7838);">Auto Calibrate...</div>
<div class="t" style="left:1091.70px;top:288.48px;font-family:'Liberation Sans', sans-serif;font-size:9.71px;line-height:9.71px;color:#111;transform:scaleX(0.7950);">using Clemex Micrometer</div>
<div style="left:1014px;top:331px;width:571px;height:282px;background:#f0f0f0;border:1px solid #9a9a9a;box-shadow:2px 4px 12px rgba(0,0,0,0.28);"></div>
<div style="left:1015px;top:332px;width:569px;height:19px;background:#fff;"></div>
<div class="t" style="left:1017.80px;top:335.86px;font-family:'Liberation Sans', sans-serif;font-size:9.86px;line-height:9.86px;color:#1a1a1a;transform:scaleX(0.9210);">Auto Calibration using Clemex Micrometer</div>
<svg style="position:absolute;left:1567px;top:336px;" width="11" height="11" viewBox="1567 336 11 11"><path d="M1568.8 337.5 l7.8 7.8 M1576.6 337.5 l-7.8 7.8" stroke="#222" stroke-width="1.1"/></svg>
<div style="left:1021px;top:357px;width:471px;height:192px;background:#fff;border:1px solid #a8a8a8;border-right-color:#c8c8c8;"></div>
<div style="left:1022px;top:358px;width:1px;height:190px;background:#c8c8c8;"></div>
<div style="left:1076px;top:359px;width:1px;height:174px;background:#f1f1f1;"></div>
<div style="left:1128px;top:359px;width:1px;height:174px;background:#f1f1f1;"></div>
<div style="left:1199px;top:359px;width:1px;height:174px;background:#f1f1f1;"></div>
<div style="left:1266.5px;top:359px;width:1.0px;height:174px;background:#f1f1f1;"></div>
<div style="left:1368px;top:359px;width:1px;height:174px;background:#f1f1f1;"></div>
<div style="left:1435.5px;top:359px;width:1.0px;height:174px;background:#f1f1f1;"></div>
<div style="left:1024px;top:399px;width:466px;height:1px;border-top:1px dotted #ececec;"></div>
<div style="left:1024px;top:410px;width:466px;height:1px;border-top:1px dotted #ececec;"></div>
<div style="left:1024px;top:421px;width:466px;height:1px;border-top:1px dotted #ececec;"></div>
<div style="left:1024px;top:432px;width:466px;height:1px;border-top:1px dotted #ececec;"></div>
<div style="left:1024px;top:444px;width:466px;height:1px;border-top:1px dotted #ececec;"></div>
<div style="left:1024px;top:455px;width:466px;height:1px;border-top:1px dotted #ececec;"></div>
<div style="left:1024px;top:466px;width:466px;height:1px;border-top:1px dotted #ececec;"></div>
<div style="left:1024px;top:477px;width:466px;height:1px;border-top:1px dotted #ececec;"></div>
<div style="left:1024px;top:489px;width:466px;height:1px;border-top:1px dotted #ececec;"></div>
<div style="left:1024px;top:500px;width:466px;height:1px;border-top:1px dotted #ececec;"></div>
<div style="left:1024px;top:511px;width:466px;height:1px;border-top:1px dotted #ececec;"></div>
<div style="left:1024px;top:522px;width:466px;height:1px;border-top:1px dotted #ececec;"></div>
<div style="left:1025px;top:387px;width:464px;height:12px;background:#efefef;"></div>
<div class="t" style="left:1027.20px;top:362.68px;font-family:'Liberation Mono', monospace;font-size:9.55px;line-height:9.55px;color:#222;transform:scaleX(0.8730);">Mag.</div>
<div class="t" style="left:1080.30px;top:362.68px;font-family:'Liberation Mono', monospace;font-size:9.55px;line-height:9.55px;color:#222;transform:scaleX(0.8980);">Nominal</div>
<div class="t" style="left:1132.70px;top:362.68px;font-family:'Liberation Mono', monospace;font-size:9.55px;line-height:9.55px;color:#222;transform:scaleX(0.8992);">Length(µm)</div>
<div class="t" style="left:1203.80px;top:362.68px;font-family:'Liberation Mono', monospace;font-size:9.55px;line-height:9.55px;color:#222;transform:scaleX(0.9036);">µm/pixel</div>
<div class="t" style="left:1271.70px;top:362.68px;font-family:'Liberation Mono', monospace;font-size:9.55px;line-height:9.55px;color:#222;transform:scaleX(0.9021);">Uncertainty(µm)</div>
<div class="t" style="left:1372.70px;top:362.68px;font-family:'Liberation Mono', monospace;font-size:9.55px;line-height:9.55px;color:#222;transform:scaleX(0.9014);">Previous</div>
<div class="t" style="left:1439.50px;top:362.68px;font-family:'Liberation Mono', monospace;font-size:9.55px;line-height:9.55px;color:#222;transform:scaleX(0.9099);">Delta(µm)</div>
<div class="t" style="left:1027.20px;top:377.88px;font-family:'Liberation Mono', monospace;font-size:9.55px;line-height:9.55px;color:#111;transform:scaleX(0.9196);">25x</div>
<div class="t" style="left:1027.20px;top:388.68px;font-family:'Liberation Mono', monospace;font-size:9.55px;line-height:9.55px;color:#111;transform:scaleX(0.9196);">50x</div>
<div class="t" style="left:1027.20px;top:400.18px;font-family:'Liberation Mono', monospace;font-size:9.55px;line-height:9.55px;color:#111;transform:scaleX(0.9298);">100x</div>
<div class="t" style="left:1027.20px;top:411.48px;font-family:'Liberation Mono', monospace;font-size:9.55px;line-height:9.55px;color:#111;transform:scaleX(0.9298);">200x</div>
<div class="t" style="left:1027.20px;top:422.68px;font-family:'Liberation Mono', monospace;font-size:9.55px;line-height:9.55px;color:#111;transform:scaleX(0.9298);">500x</div>
<div class="t" style="left:1027.20px;top:434.08px;font-family:'Liberation Mono', monospace;font-size:9.55px;line-height:9.55px;color:#111;transform:scaleX(0.9184);">1000x</div>
<div class="t" style="left:1080.00px;top:388.68px;font-family:'Liberation Mono', monospace;font-size:9.55px;line-height:9.55px;color:#111;transform:scaleX(0.9312);">700</div>
<div class="t" style="left:1138.00px;top:388.68px;font-family:'Liberation Mono', monospace;font-size:9.55px;line-height:9.55px;color:#111;transform:scaleX(0.9079);">699.9</div>
<div class="t" style="left:1209.00px;top:388.68px;font-family:'Liberation Mono', monospace;font-size:9.55px;line-height:9.55px;color:#111;transform:scaleX(0.9021);">1.0424</div>
<div class="t" style="left:1271.00px;top:388.68px;font-family:'Liberation Mono', monospace;font-size:9.55px;line-height:9.55px;color:#111;transform:scaleX(0.8980);">0.00061</div>
<div class="t" style="left:1378.00px;top:388.68px;font-family:'Liberation Mono', monospace;font-size:9.55px;line-height:9.55px;color:#111;transform:scaleX(0.9021);">1.0423</div>
<div class="t" style="left:1440.00px;top:388.68px;font-family:'Liberation Mono', monospace;font-size:9.55px;line-height:9.55px;color:#111;transform:scaleX(0.9167);">-0.00010</div>
<div style="left:1023px;top:534px;width:468px;height:13px;background:#f0f0f0;"></div>
<div style="left:1036px;top:535px;width:332px;height:11px;background:#c4c4c4;"></div>
<svg style="position:absolute;left:1025px;top:536px;" width="8" height="9" viewBox="1025 536 8 9"><path d="M1031 537.5 l-3.5 3 l3.5 3" stroke="#222" stroke-width="1.3" fill="none"/></svg>
<svg style="position:absolute;left:1480px;top:536px;" width="8" height="9" viewBox="1480 536 8 9"><path d="M1482.5 537.5 l3.5 3 l-3.5 3" stroke="#222" stroke-width="1.3" fill="none"/></svg>
<div class="t" style="left:1022.50px;top:575.98px;font-family:'Liberation Sans', sans-serif;font-size:9.71px;line-height:9.71px;color:#111;transform:scaleX(0.8001);">Status:</div>
<div style="left:1087px;top:575px;width:403px;height:14px;border-top:2px solid #6d6d6d;border-left:1px solid #6d6d6d;border-right:1px solid #fafafa;border-bottom:1px solid #fafafa;"></div>
<div class="t" style="left:1091.30px;top:576.78px;font-family:'Liberation Sans', sans-serif;font-size:9.71px;line-height:9.71px;color:#111;transform:scaleX(0.8233);">Auto Centering Target...</div>
<div class="t" style="left:1022.20px;top:594.78px;font-family:'Liberation Sans', sans-serif;font-size:9.71px;line-height:9.71px;color:#111;transform:scaleX(0.7980);">Auto Calibration:</div>
<div style="left:1087px;top:597px;width:403px;height:9px;background:#e6e6e6;border:1px solid #bcbcbc;"></div>
<div style="left:1088px;top:598px;width:4px;height:7px;background:#06b025;"></div>
<div class="t" style="left:1499.20px;top:359.66px;font-family:'Liberation Sans', sans-serif;font-size:9.86px;line-height:9.86px;color:#111;transform:scaleX(0.7850);">Serial Number:</div>
<div style="left:1499px;top:372px;width:76px;height:14px;background:#fff;border-top:2px solid #6d6d6d;border-left:1px solid #6d6d6d;border-right:1px solid #e8e8e8;border-bottom:1px solid #e8e8e8;"></div>
<div class="t" style="left:1501.60px;top:374.21px;font-family:'Liberation Sans', sans-serif;font-size:10.14px;line-height:10.14px;font-weight:bold;color:#2a8a2a;transform:scaleX(0.9077);">CL-4322830</div>
<div style="left:1499px;top:393px;width:77px;height:40px;border:1px solid #dcdcdc;"></div>
<div style="left:1505px;top:390px;width:61px;height:8px;background:#f0f0f0;"></div>
<div class="t" style="left:1506.00px;top:388.56px;font-family:'Liberation Sans', sans-serif;font-size:9.86px;line-height:9.86px;color:#111;transform:scaleX(0.7958);">Slide Orientation</div>
<svg style="position:absolute;left:1509px;top:401px;" width="13" height="28" viewBox="1509 401 13 28"><circle cx="1515.2" cy="407.6" r="4.6" fill="#fff" stroke="#333" stroke-width="1"/><circle cx="1515.2" cy="422.7" r="4.6" fill="#fff" stroke="#333" stroke-width="1"/><circle cx="1515.2" cy="422.7" r="2.4" fill="#111"/></svg>
<div class="t" style="left:1522.70px;top:402.66px;font-family:'Liberation Sans', sans-serif;font-size:9.86px;line-height:9.86px;color:#111;transform:scaleX(0.8198);">Vertical</div>
<div class="t" style="left:1522.70px;top:417.66px;font-family:'Liberation Sans', sans-serif;font-size:9.86px;line-height:9.86px;color:#111;transform:scaleX(0.7960);">Horizontal</div>
<div style="left:1505px;top:459px;width:10px;height:10px;background:#fff;border:1px solid #333;"></div>
<div class="t" style="left:1517.00px;top:459.16px;font-family:'Liberation Sans', sans-serif;font-size:9.86px;line-height:9.86px;color:#111;transform:scaleX(0.8043);">Auto Exposure</div>
<div style="left:1505px;top:475px;width:10px;height:10px;background:#fff;border:1px solid #333;"></div>
<svg style="position:absolute;left:1505px;top:475px;" width="10" height="10" viewBox="1505 475 10 10"><path d="M1506.8 480 l2.2 2.4 l4.5 -5" stroke="#111" stroke-width="1.2" fill="none"/></svg>
<div class="t" style="left:1517.00px;top:474.66px;font-family:'Liberation Sans', sans-serif;font-size:9.86px;line-height:9.86px;color:#111;transform:scaleX(0.8356);">No Autofocus</div>
<div style="left:1500px;top:490px;width:75px;height:16px;background:#e1e1e1;border:1px solid #b9b9b9;"></div>
<div class="t" style="left:1507.00px;top:493.43px;font-family:'Liberation Sans', sans-serif;font-size:10.00px;line-height:10.00px;color:#111;transform:scaleX(0.7722);">Calibrate All Mag.</div>
<div style="left:1500px;top:509px;width:75px;height:16px;background:#cccccc;border:1px solid #bfbfbf;"></div>
<div class="t" style="left:1505.00px;top:512.13px;font-family:'Liberation Sans', sans-serif;font-size:10.00px;line-height:10.00px;color:#a3a3a3;transform:scaleX(0.7683);">Calibrate 50x Mag.</div>
<div style="left:1500px;top:527px;width:75px;height:16px;background:#cccccc;border:1px solid #bfbfbf;"></div>
<div class="t" style="left:1529.70px;top:529.93px;font-family:'Liberation Sans', sans-serif;font-size:10.00px;line-height:10.00px;color:#a3a3a3;transform:scaleX(0.7932);">Stop</div>
<div style="left:1500px;top:545px;width:75px;height:16px;background:#e1e1e1;border:1px solid #b9b9b9;"></div>
<div class="t" style="left:1512.00px;top:548.43px;font-family:'Liberation Sans', sans-serif;font-size:10.00px;line-height:10.00px;color:#111;transform:scaleX(0.7903);">Reset all Mag.</div>
<div style="left:1500px;top:570px;width:75px;height:16px;background:#e1e1e1;border:1px solid #b9b9b9;"></div>
<div class="t" style="left:1506.00px;top:573.13px;font-family:'Liberation Sans', sans-serif;font-size:10.00px;line-height:10.00px;color:#111;transform:scaleX(0.7742);">Apply Calibrations</div>
<div style="left:1500px;top:589px;width:75px;height:16px;background:#e1e1e1;border:1px solid #b9b9b9;"></div>
<div class="t" style="left:1527.80px;top:592.13px;font-family:'Liberation Sans', sans-serif;font-size:10.00px;line-height:10.00px;color:#111;transform:scaleX(0.7789);">Close</div></body></html>
